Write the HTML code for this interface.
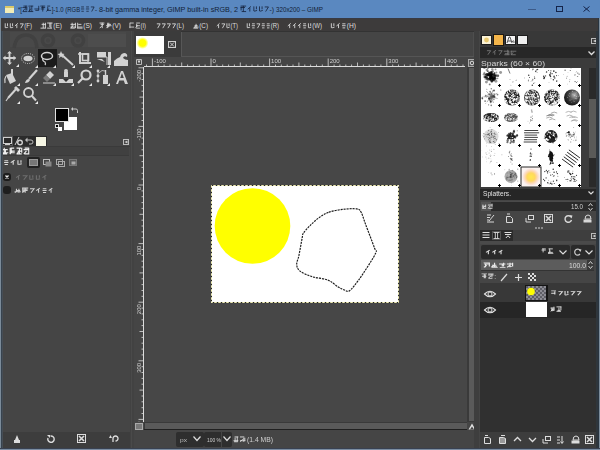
<!DOCTYPE html>
<html><head><meta charset="utf-8">
<style>
*{margin:0;padding:0;box-sizing:border-box}
html,body{width:600px;height:450px;overflow:hidden;background:#454545;font-family:"Liberation Sans",sans-serif;color:#d8d8d8}
.a{position:absolute}
.t{position:absolute;white-space:nowrap;line-height:1}
svg{position:absolute;overflow:visible}
#wrap{position:absolute;left:0;top:0;width:600px;height:450px;overflow:hidden;filter:blur(0.35px)}
</style></head><body><div id="wrap">
<div class="a" style="left:0px;top:0px;width:600px;height:18px;background:#5a88c0;"></div>
<div class="a" style="left:5px;top:6px;width:9px;height:7px;background:#f2ecb8;border-top:2px solid #d9c86a"></div>
<svg style="left:18px;top:5px" width="82" height="11"><g transform="scale(0.8263,1)"><path d="M6.56 1.09H11.28M5.38 2.53H10.10M5.97 6.56H11.28M9.51 0.80V5.41M10.69 1.95V5.41M8.33 3.68L5.67 6.56M12.58 1.09H18.48M12.58 6.56H18.48M14.35 1.95V6.56M16.71 0.80V6.56M15.53 3.68L12.87 6.56M19.78 3.97H25.68M20.96 5.41H25.09M25.09 0.80V5.41M26.98 1.09H32.88M28.16 2.53H32.88M27.57 3.97H31.70M29.93 0.80V6.56M35.36 1.09H38.90M35.36 5.41H40.08M35.95 1.95V5.41M37.13 3.68L34.47 6.56M76.43 1.95H79.87M76.18 3.97H80.12M76.67 6.27H79.63M82.43 1.95H85.87M82.18 3.97H86.12M82.67 6.27H85.63M88.18 1.95H92.12L89.17 6.56" fill="none" stroke="#121e36" stroke-width="0.80"/><text x="0.00" y="6.80" font-size="8" fill="#121e36" font-family="Liberation Sans" textLength="4.80" lengthAdjust="spacingAndGlyphs">*[</text><text x="40.80" y="6.80" font-size="8" fill="#121e36" font-family="Liberation Sans" textLength="34.41" lengthAdjust="spacingAndGlyphs">]-1.0 (RGB</text><text x="93.21" y="6.80" font-size="8" fill="#121e36" font-family="Liberation Sans" textLength="2.40" lengthAdjust="spacingAndGlyphs">-</text></g></svg>
<svg style="left:99px;top:5px" width="141" height="11"><text x="0" y="6.80" font-size="8" fill="#121e36" font-weight="normal" textLength="139" lengthAdjust="spacingAndGlyphs" font-family="Liberation Sans">8-bit gamma integer, GIMP built-in sRGB, 2</text></svg>
<svg style="left:240px;top:5px" width="37" height="11"><g transform="scale(0.9446,1)"><path d="M0.58 1.09H6.48M0.58 2.53H5.30M1.76 6.56H6.48M1.17 1.95V5.41M3.53 0.80V6.56M11.62 1.38L8.17 4.26M10.39 2.82V6.56M14.66 1.38V5.98Q14.91 6.56 18.11 5.41M17.37 1.38V4.26M20.66 1.38V5.98Q20.91 6.56 24.11 5.41M23.37 1.38V4.26M26.17 1.95H30.11L27.16 6.56" fill="none" stroke="#121e36" stroke-width="0.80"/><text x="31.20" y="6.80" font-size="8" fill="#121e36" font-family="Liberation Sans" textLength="4.80" lengthAdjust="spacingAndGlyphs">-)</text></g></svg>
<svg style="left:276px;top:5px" width="49" height="11"><text x="0" y="6.80" font-size="8" fill="#121e36" font-weight="normal" textLength="47" lengthAdjust="spacingAndGlyphs" font-family="Liberation Sans">320x200 – GIMP</text></svg>
<div class="a" style="left:528px;top:9px;width:8px;height:1px;background:#3c5a88;"></div>
<div class="a" style="left:556px;top:6px;width:7px;height:6px;background:transparent;border:1px solid #14244a"></div>
<svg style="left:583px;top:6px;" width="7" height="6" viewBox="0 0 7 6"><path d="M0.5 0.5L6.5 5.5M6.5 0.5L0.5 5.5" stroke="#14244a" stroke-width="1"/></svg>
<div class="a" style="left:0px;top:18px;width:600px;height:13px;background:#3d3b3b;"></div>
<div class="a" style="left:0px;top:18px;width:600px;height:1px;background:#383a44;"></div>
<svg style="left:4px;top:22px" width="31" height="10"><g transform="scale(0.8998,1)"><path d="M1.37 1.29V5.61Q1.60 6.15 4.60 5.07M3.91 1.29V3.99M7.00 1.29V5.61Q7.23 6.15 10.23 5.07M9.53 1.29V3.99M15.39 1.29L12.16 3.99M14.24 2.64V6.15M17.79 1.83H21.48L18.71 6.15" fill="none" stroke="#dedede" stroke-width="0.90"/><text x="22.50" y="6.38" font-size="7.5" fill="#dedede" font-family="Liberation Sans" textLength="8.62" lengthAdjust="spacingAndGlyphs">(F)</text></g></svg>
<svg style="left:40px;top:22px" width="25" height="10"><g transform="scale(0.9779,1)"><path d="M1.65 2.37H6.07M0.54 6.15H6.07M3.31 0.75V6.15M5.52 0.75V6.15M7.29 1.02H12.82M7.29 6.15H12.27M10.06 0.75V5.07M11.16 0.75V6.15" fill="none" stroke="#dedede" stroke-width="0.90"/><text x="13.50" y="6.38" font-size="7.5" fill="#dedede" font-family="Liberation Sans" textLength="9.00" lengthAdjust="spacingAndGlyphs">(E)</text></g></svg>
<svg style="left:70px;top:22px" width="25" height="10"><g transform="scale(0.9779,1)"><path d="M0.54 2.37H6.07M0.54 5.07H6.07M0.54 6.15H4.97M2.20 0.75V5.07M5.52 0.75V6.15M3.31 3.45L0.82 6.15M8.40 2.37H11.72M7.84 5.07H12.82M7.29 6.15H12.82M7.84 0.75V6.15" fill="none" stroke="#dedede" stroke-width="0.90"/><text x="13.50" y="6.38" font-size="7.5" fill="#dedede" font-family="Liberation Sans" textLength="9.00" lengthAdjust="spacingAndGlyphs">(S)</text></g></svg>
<svg style="left:99px;top:22px" width="25" height="10"><g transform="scale(0.9779,1)"><path d="M0.54 1.02H5.52M1.65 2.37H4.97M3.31 0.75V6.15M3.31 3.45L0.82 6.15M8.40 2.37H12.27M7.29 3.72H12.82M8.95 0.75V6.15M10.06 0.75V5.07M10.06 3.45L7.57 6.15" fill="none" stroke="#dedede" stroke-width="0.90"/><text x="13.50" y="6.38" font-size="7.5" fill="#dedede" font-family="Liberation Sans" textLength="9.00" lengthAdjust="spacingAndGlyphs">(V)</text></g></svg>
<svg style="left:129px;top:22px" width="20" height="10"><g transform="scale(0.8555,1)"><path d="M1.09 1.02H5.52M0.54 5.07H6.07M1.09 0.75V6.15M8.40 1.02H12.82M8.40 3.72H12.82M8.40 6.15H12.82M8.95 1.83V5.07M10.06 3.45L7.57 6.15" fill="none" stroke="#dedede" stroke-width="0.90"/><text x="13.50" y="6.38" font-size="7.5" fill="#dedede" font-family="Liberation Sans" textLength="6.37" lengthAdjust="spacingAndGlyphs">(I)</text></g></svg>
<svg style="left:156px;top:22px" width="31" height="10"><g transform="scale(0.9106,1)"><path d="M0.91 1.83H4.60L1.83 6.15M6.54 1.83H10.23L7.46 6.15M12.16 1.83H15.85L13.08 6.15M17.79 1.83H21.48L18.71 6.15" fill="none" stroke="#dedede" stroke-width="0.90"/><text x="22.50" y="6.38" font-size="7.5" fill="#dedede" font-family="Liberation Sans" textLength="8.25" lengthAdjust="spacingAndGlyphs">(L)</text></g></svg>
<svg style="left:193px;top:22px" width="18" height="10"><g transform="scale(0.9305,1)"><path d="M1.65 3.72H4.97M1.65 5.07H6.07M0.54 6.15H5.52M3.31 1.83V6.15M3.31 3.45L0.82 6.15" fill="none" stroke="#dedede" stroke-width="0.90"/><text x="6.75" y="6.38" font-size="7.5" fill="#dedede" font-family="Liberation Sans" textLength="9.37" lengthAdjust="spacingAndGlyphs">(C)</text></g></svg>
<svg style="left:216px;top:22px" width="25" height="10"><g transform="scale(0.8630,1)"><path d="M4.14 1.29L0.91 3.99M2.99 2.64V6.15M6.54 1.83H10.23L7.46 6.15M12.62 1.29V5.61Q12.85 6.15 15.85 5.07M15.16 1.29V3.99" fill="none" stroke="#dedede" stroke-width="0.90"/><text x="16.88" y="6.38" font-size="7.5" fill="#dedede" font-family="Liberation Sans" textLength="8.62" lengthAdjust="spacingAndGlyphs">(T)</text></g></svg>
<svg style="left:246px;top:22px" width="36" height="10"><g transform="scale(0.8801,1)"><path d="M1.37 1.29V5.61Q1.60 6.15 4.60 5.07M3.91 1.29V3.99M6.77 1.83H10.00M6.54 3.72H10.23M7.00 5.88H9.77M12.16 1.83H15.85L13.08 6.15M18.02 1.83H21.25M17.79 3.72H21.48M18.25 5.88H21.02M23.64 1.83H26.87M23.41 3.72H27.10M23.87 5.88H26.64" fill="none" stroke="#dedede" stroke-width="0.90"/><text x="28.12" y="6.38" font-size="7.5" fill="#dedede" font-family="Liberation Sans" textLength="9.37" lengthAdjust="spacingAndGlyphs">(R)</text></g></svg>
<svg style="left:287px;top:22px" width="38" height="10"><g transform="scale(0.8976,1)"><path d="M4.14 1.29L0.91 3.99M2.99 2.64V6.15M9.77 1.29L6.54 3.99M8.61 2.64V6.15M15.39 1.29L12.16 3.99M14.24 2.64V6.15M18.02 1.83H21.25M17.79 3.72H21.48M18.25 5.88H21.02M23.87 1.29V5.61Q24.10 6.15 27.10 5.07M26.41 1.29V3.99" fill="none" stroke="#dedede" stroke-width="0.90"/><text x="28.12" y="6.38" font-size="7.5" fill="#dedede" font-family="Liberation Sans" textLength="10.87" lengthAdjust="spacingAndGlyphs">(W)</text></g></svg>
<svg style="left:330px;top:22px" width="29" height="10"><g transform="scale(0.9907,1)"><path d="M1.37 1.29V5.61Q1.60 6.15 4.60 5.07M3.91 1.29V3.99M9.77 1.29L6.54 3.99M8.61 2.64V6.15M12.39 1.83H15.62M12.16 3.72H15.85M12.62 5.88H15.39" fill="none" stroke="#dedede" stroke-width="0.90"/><text x="16.88" y="6.38" font-size="7.5" fill="#dedede" font-family="Liberation Sans" textLength="9.37" lengthAdjust="spacingAndGlyphs">(H)</text></g></svg>
<div class="a" style="left:1px;top:31px;width:129px;height:417px;background:#454545;"></div>
<div class="a" style="left:10px;top:32px;width:116px;height:15px;background:#494949;"></div>
<svg style="left:10px;top:32px;" width="116" height="15" viewBox="0 0 116 15"><g fill="none" stroke="#414141" stroke-width="3.5"><path d="M4 16 Q6 3 16 3 Q26 3 27 16"/><circle cx="38" cy="8.5" r="5.5"/><circle cx="68" cy="8.5" r="5.5"/></g><path d="M78 2h38v13h-38z" fill="#4d4d4d"/><circle cx="38" cy="8.5" r="2" fill="#444"/><circle cx="68" cy="8.5" r="2" fill="#444"/></svg>
<div class="a" style="left:38px;top:49px;width:19px;height:18px;background:#1b1b1b;"></div>
<svg style="left:1px;top:49px;" width="18" height="18" viewBox="0 0 18 18"><path d="M8.5 3v12M2.5 9h12" stroke="#d2d2d2" stroke-width="1.8"/><path d="M8.5 2l-2.5 2.5h5zM8.5 16l-2.5-2.5h5zM2 9l2.5-2.5v5zM15 9l-2.5-2.5v5z" fill="#d2d2d2"/></svg>
<svg style="left:21px;top:49px;" width="18" height="18" viewBox="0 0 18 18"><ellipse cx="7" cy="9.5" rx="4.5" ry="2.7" fill="#d2d2d2"/><ellipse cx="7" cy="9.5" rx="6.5" ry="5" fill="none" stroke="#d2d2d2" stroke-width="1" stroke-dasharray="1 1.2"/></svg>
<svg style="left:39px;top:49px;" width="18" height="18" viewBox="0 0 18 18"><ellipse cx="8" cy="7" rx="5.5" ry="3.5" fill="none" stroke="#d2d2d2" stroke-width="1.5"/><path d="M4 9 Q3 12 6 13 Q7 15 6 16" fill="none" stroke="#d2d2d2" stroke-width="1.3"/></svg>
<svg style="left:57px;top:49px;" width="18" height="18" viewBox="0 0 18 18"><path d="M5 6L16 16" stroke="#d2d2d2" stroke-width="2"/><path d="M4 2l1 2.5 2.5.5-2 1.5.5 2.5-2-1.5-2 1.5.5-2.5-2-1.5 2.5-.5z" fill="#d2d2d2"/></svg>
<svg style="left:75px;top:49px;" width="18" height="18" viewBox="0 0 18 18"><path d="M5 3v11h11" fill="none" stroke="#d2d2d2" stroke-width="2"/><rect x="7.5" y="5" width="6" height="6.5" fill="none" stroke="#d2d2d2" stroke-width="1.6"/><path d="M3 5h10v10" fill="none" stroke="#d2d2d2" stroke-width="1.3"/></svg>
<svg style="left:93px;top:49px;" width="18" height="18" viewBox="0 0 18 18"><path d="M4 3h9v5h-9z M15 3h3v13h-3z M4 10h5l3 3" fill="#d2d2d2"/><path d="M4 8l10 0 0 8" fill="none" stroke="#d2d2d2" stroke-width="1"/></svg>
<svg style="left:111px;top:49px;" width="18" height="18" viewBox="0 0 18 18"><path d="M3 17v-5 Q6 9 9 8 Q10 4 14 4 Q17 5 16 8 Q13 6 12 9 Q14 11 17 11v6z" fill="#d2d2d2"/></svg>
<svg style="left:3px;top:67px;" width="18" height="18" viewBox="0 0 18 18"><path d="M3 8l6-2 4 8-6 3z" fill="#d2d2d2"/><path d="M9 2v6" stroke="#d2d2d2" stroke-width="2"/><path d="M3 9 Q1 12 2 16" stroke="#d2d2d2" stroke-width="1.2" fill="none"/></svg>
<svg style="left:21px;top:67px;" width="18" height="18" viewBox="0 0 18 18"><path d="M16 3L8 12" stroke="#d2d2d2" stroke-width="2.2"/><path d="M8 12 Q5 12 4 16 Q8 16 9 13z" fill="#d2d2d2"/></svg>
<svg style="left:39px;top:67px;" width="18" height="18" viewBox="0 0 18 18"><path d="M11 4l4 4-4 4-4-4z" fill="#d2d2d2"/><path d="M7 8l4 4-3 3-4-4z" fill="#7a7a7a"/><path d="M4 16h12" stroke="#d2d2d2" stroke-width="1"/></svg>
<svg style="left:57px;top:67px;" width="18" height="18" viewBox="0 0 18 18"><path d="M7 5h4v5h-4z" fill="#d2d2d2"/><circle cx="9" cy="4" r="2" fill="#d2d2d2"/><path d="M2 12h14v4h-14z" fill="#d2d2d2"/><path d="M6 12l3 3 3-3z" fill="#333"/></svg>
<svg style="left:75px;top:67px;" width="18" height="18" viewBox="0 0 18 18"><circle cx="11" cy="8" r="4.5" fill="none" stroke="#d2d2d2" stroke-width="2.2"/><path d="M8 11L3 16" stroke="#d2d2d2" stroke-width="2.2"/></svg>
<svg style="left:93px;top:67px;" width="18" height="18" viewBox="0 0 18 18"><circle cx="5" cy="4" r="1.4" fill="#d2d2d2"/><circle cx="5" cy="9" r="1.4" fill="#d2d2d2"/><circle cx="5" cy="14" r="1.4" fill="#d2d2d2"/><path d="M5 5v8" stroke="#d2d2d2" stroke-width=".8"/><rect x="10" y="8" width="5" height="9" fill="#d2d2d2"/><path d="M12.5 3v5" stroke="#d2d2d2" stroke-width="1.4"/><path d="M6 6 Q9 2 12 4" stroke="#d2d2d2" fill="none" stroke-width=".8"/></svg>
<svg style="left:111px;top:67px;" width="18" height="18" viewBox="0 0 18 18"><path d="M5 17L10 4h2l5 13h-3l-1.2-3.5h-4.6L7 17z M9.2 11h3.6L11 6z" fill="#d2d2d2" fill-rule="evenodd"/></svg>
<svg style="left:3px;top:85px;" width="18" height="18" viewBox="0 0 18 18"><path d="M14 3L5 13" stroke="#d2d2d2" stroke-width="2"/><path d="M11 3l4 4 2-2-4-4z" fill="#d2d2d2"/><path d="M5 13l-2 3" stroke="#d2d2d2" stroke-width="1.2"/></svg>
<svg style="left:21px;top:85px;" width="18" height="18" viewBox="0 0 18 18"><circle cx="7.5" cy="7.5" r="4.5" fill="none" stroke="#d2d2d2" stroke-width="1.8"/><path d="M10.5 10.5L15 15.5" stroke="#d2d2d2" stroke-width="2"/></svg>
<svg style="left:16px;top:64px;" width="3" height="3" viewBox="0 0 3 3"><path d="M3 0v3h-3z" fill="#e8e8e8"/></svg>
<svg style="left:35px;top:65px;" width="3" height="3" viewBox="0 0 3 3"><path d="M3 0v3h-3z" fill="#e8e8e8"/></svg>
<svg style="left:53px;top:65px;" width="3" height="3" viewBox="0 0 3 3"><path d="M3 0v3h-3z" fill="#e8e8e8"/></svg>
<svg style="left:72px;top:65px;" width="3" height="3" viewBox="0 0 3 3"><path d="M3 0v3h-3z" fill="#e8e8e8"/></svg>
<svg style="left:89px;top:65px;" width="3" height="3" viewBox="0 0 3 3"><path d="M3 0v3h-3z" fill="#e8e8e8"/></svg>
<svg style="left:107px;top:65px;" width="3" height="3" viewBox="0 0 3 3"><path d="M3 0v3h-3z" fill="#e8e8e8"/></svg>
<svg style="left:17px;top:83px;" width="3" height="3" viewBox="0 0 3 3"><path d="M3 0v3h-3z" fill="#e8e8e8"/></svg>
<svg style="left:35px;top:83px;" width="3" height="3" viewBox="0 0 3 3"><path d="M3 0v3h-3z" fill="#e8e8e8"/></svg>
<svg style="left:53px;top:83px;" width="3" height="3" viewBox="0 0 3 3"><path d="M3 0v3h-3z" fill="#e8e8e8"/></svg>
<svg style="left:71px;top:83px;" width="3" height="3" viewBox="0 0 3 3"><path d="M3 0v3h-3z" fill="#e8e8e8"/></svg>
<svg style="left:89px;top:83px;" width="3" height="3" viewBox="0 0 3 3"><path d="M3 0v3h-3z" fill="#e8e8e8"/></svg>
<svg style="left:107px;top:83px;" width="3" height="3" viewBox="0 0 3 3"><path d="M3 0v3h-3z" fill="#e8e8e8"/></svg>
<svg style="left:17px;top:101px;" width="3" height="3" viewBox="0 0 3 3"><path d="M3 0v3h-3z" fill="#e8e8e8"/></svg>
<svg style="left:35px;top:101px;" width="3" height="3" viewBox="0 0 3 3"><path d="M3 0v3h-3z" fill="#e8e8e8"/></svg>
<div class="a" style="left:64px;top:117px;width:13px;height:13px;background:#fff;"></div>
<div class="a" style="left:55px;top:108px;width:14px;height:14px;background:#000;border:1px solid #e0e0e0"></div>
<svg style="left:71px;top:107px;" width="7" height="7" viewBox="0 0 7 7"><path d="M1 2h4a1.5 1.5 0 0 1 1.5 1.5V6" fill="none" stroke="#ccc" stroke-width="1"/><path d="M0 2l2-2v4z" fill="#ccc"/></svg>
<div class="a" style="left:55px;top:124px;width:4px;height:4px;background:#000;border:1px solid #ddd"></div>
<div class="a" style="left:58px;top:127px;width:4px;height:4px;background:#fff;"></div>
<div class="a" style="left:2px;top:136px;width:45px;height:10px;background:#2b2b2b;"></div>
<div class="a" style="left:2px;top:136px;width:11px;height:10px;background:#2b2b2b;border:1px solid #555"></div>
<svg style="left:3px;top:137px;" width="9" height="8" viewBox="0 0 9 8"><rect x="0.5" y="0.5" width="8" height="6" fill="none" stroke="#cfcfcf"/><path d="M2 7.5h5" stroke="#cfcfcf"/></svg>
<svg style="left:14px;top:137px;" width="9" height="8" viewBox="0 0 9 8"><path d="M1 8L5 0" stroke="#d0d0d0" stroke-width="1"/><circle cx="6" cy="5.5" r="2.3" fill="none" stroke="#d0d0d0" stroke-width="1.4"/></svg>
<svg style="left:25px;top:137px;" width="9" height="8" viewBox="0 0 9 8"><path d="M2 3h4a2 2 0 0 1 0 4H4" fill="none" stroke="#bbb" stroke-width="1"/><path d="M0 3l2.5-2.5v5z" fill="#bbb"/></svg>
<div class="a" style="left:36px;top:137px;width:10px;height:9px;background:#f6f6e4;"></div>
<svg style="left:123px;top:139px;" width="6" height="6" viewBox="0 0 6 6"><rect x="0.5" y="0.5" width="5" height="5" fill="none" stroke="#bbb"/><path d="M4.5 1.5v3l-3-1.5z" fill="#ccc"/></svg>
<div class="a" style="left:2px;top:146px;width:128px;height:1px;background:#3a3a3a;"></div>
<div class="a" style="left:2px;top:147px;width:127px;height:8px;background:#404040;"></div>
<svg style="left:2px;top:147px" width="31" height="11"><g transform="scale(0.9150,1)"><path d="M0.61 2.69H6.26M0.61 5.75H6.88M0.61 6.97H5.63M2.49 0.85V6.97M3.75 2.07V6.97M9.52 1.16H13.28M9.52 4.22H13.91M9.52 5.75H13.91M8.89 0.85V6.97M10.14 0.85V5.75M11.40 3.91L8.58 6.97M15.91 1.16H20.93M17.17 4.22H22.19M15.91 6.97H21.56M19.05 0.85V6.97M21.56 0.85V5.75M19.05 3.91L16.23 6.97M24.82 1.16H29.21M23.56 2.69H29.84M24.82 6.97H29.84M29.21 0.85V6.97M26.70 3.91L23.88 6.97" fill="none" stroke="#f0f0f0" stroke-width="1.20"/></g></svg>
<div class="a" style="left:2px;top:155px;width:127px;height:1px;background:#3a3a3a;"></div>
<svg style="left:3px;top:159px" width="23" height="10"><g transform="scale(1.2698,1)"><path d="M1.07 1.71H4.08M0.85 3.47H4.29M1.28 5.49H3.86M9.11 1.20L6.10 3.72M8.04 2.46V5.74M11.78 1.20V5.24Q12.00 5.74 14.79 4.73M14.15 1.20V3.72" fill="none" stroke="#dadada" stroke-width="0.90"/></g></svg>
<div class="a" style="left:27px;top:157px;width:13px;height:11px;background:#222222;border-radius:2px"></div>
<svg style="left:29px;top:159px;" width="9" height="7" viewBox="0 0 9 7"><rect x="0.5" y="0.5" width="8" height="6" fill="#777" stroke="#999"/></svg>
<svg style="left:43px;top:159px;" width="9" height="8" viewBox="0 0 9 8"><rect x="0.5" y="0.5" width="6" height="5" fill="none" stroke="#bbb"/><rect x="2.5" y="2.5" width="6" height="5" fill="#888"/></svg>
<svg style="left:56px;top:159px;" width="9" height="8" viewBox="0 0 9 8"><rect x="0.5" y="0.5" width="6" height="5" fill="none" stroke="#aaa"/><rect x="2.5" y="2.5" width="6" height="5" fill="none" stroke="#aaa"/></svg>
<svg style="left:69px;top:159px;" width="9" height="8" viewBox="0 0 9 8"><rect x="0.5" y="0.5" width="7" height="6" fill="#5a5a5a" stroke="#777"/><rect x="2.5" y="2.5" width="4" height="3" fill="#aaa"/></svg>
<div class="a" style="left:3px;top:173px;width:8px;height:8px;background:#1c1c1c;border-radius:3px"></div>
<svg style="left:5px;top:175px;" width="4" height="4" viewBox="0 0 4 4"><path d="M0.5 0.5l3 3M3.5 0.5l-3 3" stroke="#eee" stroke-width="1.3"/></svg>
<svg style="left:15px;top:174px" width="36" height="10"><g transform="scale(1.2571,1)"><path d="M3.86 1.20L0.85 3.72M2.79 2.46V5.74M6.10 1.71H9.54L6.96 5.74M11.78 1.20V5.24Q12.00 5.74 14.79 4.73M14.15 1.20V3.72M17.03 1.20V5.24Q17.25 5.74 20.04 4.73M19.40 1.20V3.72M24.86 1.20L21.85 3.72M23.79 2.46V5.74" fill="none" stroke="#6e6e6e" stroke-width="0.90"/></g></svg>
<div class="a" style="left:3px;top:186px;width:8px;height:8px;background:#1e1e1e;border-radius:3px"></div>
<svg style="left:14px;top:187px" width="43" height="10"><g transform="scale(1.1905,1)"><path d="M1.54 3.47H5.15M0.50 4.73H5.67M2.05 1.71V4.73M4.12 1.71V5.74M3.09 3.22L0.76 5.74M6.80 0.95H11.97M7.84 2.21H11.45M7.84 3.47H11.45M7.32 0.70V5.74M9.39 0.70V5.74M9.39 3.22L7.06 5.74M13.45 1.71H16.89L14.31 5.74M21.71 1.20L18.70 3.72M20.64 2.46V5.74M24.17 1.71H27.18M23.95 3.47H27.39M24.38 5.49H26.96M32.21 1.20L29.20 3.72M31.14 2.46V5.74" fill="none" stroke="#d0d0d0" stroke-width="0.90"/></g></svg>
<div class="a" style="left:1px;top:432px;width:129px;height:16px;background:#3d3d3d;"></div>
<svg style="left:13px;top:434px;" width="8" height="10" viewBox="0 0 8 10"><path d="M4 1l2 5h-4z" fill="#ddd"/><rect x="1" y="6" width="6" height="3" fill="#ddd"/></svg>
<svg style="left:46px;top:434px;" width="9" height="10" viewBox="0 0 9 10"><path d="M2 4 A3.2 3.2 0 1 0 4.5 2" fill="none" stroke="#ddd" stroke-width="1.4"/><path d="M1 1h3v3z" fill="#ddd"/></svg>
<svg style="left:77px;top:434px;" width="9" height="10" viewBox="0 0 9 10"><rect x="0.5" y="0.5" width="8" height="8" fill="none" stroke="#ddd"/><path d="M2 2l5 5M7 2l-5 5" stroke="#ddd" stroke-width="1.6"/></svg>
<svg style="left:109px;top:434px;" width="9" height="10" viewBox="0 0 9 10"><path d="M4 8V4.5a2.5 2.5 0 1 1 2.5 2.5" fill="none" stroke="#ddd" stroke-width="1.3"/><path d="M0 4h3l-1.5-3z" fill="#ddd"/></svg>
<div class="a" style="left:130px;top:31px;width:4px;height:417px;background:#424242;"></div>
<div class="a" style="left:131px;top:31px;width:1px;height:417px;background:#4a4a4a;"></div>
<div class="a" style="left:134px;top:31px;width:342px;height:26px;background:#454545;"></div>
<div class="a" style="left:134px;top:31px;width:342px;height:1px;background:#333;"></div>
<div class="a" style="left:134px;top:31px;width:47px;height:26px;background:#3b3b3b;"></div>
<div class="a" style="left:181px;top:32px;width:1px;height:25px;background:#575757;"></div>
<div class="a" style="left:473px;top:32px;width:1px;height:25px;background:#4e4e4e;"></div>
<div class="a" style="left:181px;top:56px;width:293px;height:1px;background:#555;"></div>
<div class="a" style="left:136px;top:36px;width:28px;height:18px;background:#ffffff;"></div>
<svg style="left:136px;top:36px;" width="28" height="18" viewBox="0 0 28 18"><defs><radialGradient id="yb"><stop offset="0.55" stop-color="#ffff00"/><stop offset="1" stop-color="#ffff00" stop-opacity="0"/></radialGradient></defs><circle cx="6.5" cy="7" r="6" fill="url(#yb)"/></svg>
<svg style="left:168px;top:41px;" width="8" height="7" viewBox="0 0 8 7"><rect x="0.5" y="0.5" width="7" height="6" fill="none" stroke="#cfcfcf"/><path d="M2 1.5l4 4M6 1.5l-4 4" stroke="#cfcfcf" stroke-width="1"/></svg>
<div class="a" style="left:134px;top:57px;width:333px;height:10px;background:#454545;"></div>
<div class="a" style="left:134px;top:67px;width:10px;height:355px;background:#454545;"></div>
<svg style="left:136px;top:59px;" width="6" height="6" viewBox="0 0 6 6"><path d="M0.5 0.5h5v5h-5z" fill="none" stroke="#bbb"/><path d="M1.5 1.5l1.5 3 1.5-3z" fill="#ddd"/></svg>
<svg style="left:144px;top:57px;" width="322" height="10" viewBox="0 0 322 10"><path d="M0 9.5H321" stroke="#dcdcdc" stroke-width="1"/><path d="M2.5 7.5 V9.5 M8.4 1.5 V9.5 M14.3 7.5 V9.5 M20.1 7.5 V9.5 M26.0 7.5 V9.5 M31.8 7.5 V9.5 M37.7 5.5 V9.5 M43.6 7.5 V9.5 M49.4 7.5 V9.5 M55.3 7.5 V9.5 M61.1 7.5 V9.5 M67.0 1.5 V9.5 M72.9 7.5 V9.5 M78.7 7.5 V9.5 M84.6 7.5 V9.5 M90.4 7.5 V9.5 M96.3 5.5 V9.5 M102.2 7.5 V9.5 M108.0 7.5 V9.5 M113.9 7.5 V9.5 M119.7 7.5 V9.5 M125.6 1.5 V9.5 M131.5 7.5 V9.5 M137.3 7.5 V9.5 M143.2 7.5 V9.5 M149.0 7.5 V9.5 M154.9 5.5 V9.5 M160.8 7.5 V9.5 M166.6 7.5 V9.5 M172.5 7.5 V9.5 M178.3 7.5 V9.5 M184.2 1.5 V9.5 M190.1 7.5 V9.5 M195.9 7.5 V9.5 M201.8 7.5 V9.5 M207.6 7.5 V9.5 M213.5 5.5 V9.5 M219.4 7.5 V9.5 M225.2 7.5 V9.5 M231.1 7.5 V9.5 M236.9 7.5 V9.5 M242.8 1.5 V9.5 M248.7 7.5 V9.5 M254.5 7.5 V9.5 M260.4 7.5 V9.5 M266.2 7.5 V9.5 M272.1 5.5 V9.5 M278.0 7.5 V9.5 M283.8 7.5 V9.5 M289.7 7.5 V9.5 M295.5 7.5 V9.5 M301.4 1.5 V9.5 M307.3 7.5 V9.5 M313.1 7.5 V9.5 M319.0 7.5 V9.5 " stroke="#dcdcdc" stroke-width="0.8"/><text x="9.9" y="6" font-size="6" fill="#d0d0d0" font-family="Liberation Sans">-100</text><text x="68.5" y="6" font-size="6" fill="#d0d0d0" font-family="Liberation Sans">0</text><text x="127.1" y="6" font-size="6" fill="#d0d0d0" font-family="Liberation Sans">100</text><text x="185.7" y="6" font-size="6" fill="#d0d0d0" font-family="Liberation Sans">200</text><text x="244.3" y="6" font-size="6" fill="#d0d0d0" font-family="Liberation Sans">300</text><text x="302.9" y="6" font-size="6" fill="#d0d0d0" font-family="Liberation Sans">400</text></svg>
<svg style="left:134px;top:67px;" width="10" height="355" viewBox="0 0 10 355"><path d="M9.5 0V355" stroke="#dcdcdc" stroke-width="1"/><path d="M4.5 0.8 H9.5 M7.5 6.7 H9.5 M7.5 12.5 H9.5 M7.5 18.4 H9.5 M7.5 24.2 H9.5 M5.5 30.1 H9.5 M7.5 36.0 H9.5 M7.5 41.8 H9.5 M7.5 47.7 H9.5 M7.5 53.5 H9.5 M4.5 59.4 H9.5 M7.5 65.3 H9.5 M7.5 71.1 H9.5 M7.5 77.0 H9.5 M7.5 82.8 H9.5 M5.5 88.7 H9.5 M7.5 94.6 H9.5 M7.5 100.4 H9.5 M7.5 106.3 H9.5 M7.5 112.1 H9.5 M4.5 118.0 H9.5 M7.5 123.9 H9.5 M7.5 129.7 H9.5 M7.5 135.6 H9.5 M7.5 141.4 H9.5 M5.5 147.3 H9.5 M7.5 153.2 H9.5 M7.5 159.0 H9.5 M7.5 164.9 H9.5 M7.5 170.7 H9.5 M4.5 176.6 H9.5 M7.5 182.5 H9.5 M7.5 188.3 H9.5 M7.5 194.2 H9.5 M7.5 200.0 H9.5 M5.5 205.9 H9.5 M7.5 211.8 H9.5 M7.5 217.6 H9.5 M7.5 223.5 H9.5 M7.5 229.3 H9.5 M4.5 235.2 H9.5 M7.5 241.1 H9.5 M7.5 246.9 H9.5 M7.5 252.8 H9.5 M7.5 258.6 H9.5 M5.5 264.5 H9.5 M7.5 270.4 H9.5 M7.5 276.2 H9.5 M7.5 282.1 H9.5 M7.5 287.9 H9.5 M4.5 293.8 H9.5 M7.5 299.7 H9.5 M7.5 305.5 H9.5 M7.5 311.4 H9.5 M7.5 317.2 H9.5 M5.5 323.1 H9.5 M7.5 329.0 H9.5 M7.5 334.8 H9.5 M7.5 340.7 H9.5 M7.5 346.5 H9.5 M4.5 352.4 H9.5 " stroke="#dcdcdc" stroke-width="0.8"/><text transform="translate(7.2,14.8) rotate(-90)" font-size="6" fill="#d0d0d0" font-family="Liberation Sans">-200</text><text transform="translate(7.2,73.4) rotate(-90)" font-size="6" fill="#d0d0d0" font-family="Liberation Sans">-100</text><text transform="translate(7.2,123.3) rotate(-90)" font-size="6" fill="#d0d0d0" font-family="Liberation Sans">0</text><text transform="translate(7.2,188.6) rotate(-90)" font-size="6" fill="#d0d0d0" font-family="Liberation Sans">100</text><text transform="translate(7.2,247.2) rotate(-90)" font-size="6" fill="#d0d0d0" font-family="Liberation Sans">200</text><text transform="translate(7.2,305.8) rotate(-90)" font-size="6" fill="#d0d0d0" font-family="Liberation Sans">300</text><text transform="translate(7.2,364.4) rotate(-90)" font-size="6" fill="#d0d0d0" font-family="Liberation Sans">400</text></svg>
<div class="a" style="left:144px;top:67px;width:323px;height:355px;background:#474747;"></div>
<div class="a" style="left:211px;top:185px;width:188px;height:118px;background:#ffffff;"></div>
<svg style="left:211px;top:185px;" width="188" height="118" viewBox="0 0 188 118"><circle cx="41.5" cy="41" r="37.8" fill="#ffff00"/><rect x="0.5" y="0.5" width="187" height="117" fill="none" stroke="#2a2a20" stroke-width="1" stroke-dasharray="2 2"/><rect x="0.5" y="0.5" width="187" height="117" fill="none" stroke="#f4f0b0" stroke-width="1" stroke-dasharray="2 2" stroke-dashoffset="2"/></svg>
<svg style="left:211px;top:185px;" width="188" height="118" viewBox="0 0 188 118"><path d="M117.90 27.20 C121.97 25.78 127.67 24.85 132.30 24.30 C136.93 23.75 142.73 23.42 145.70 23.90 C148.67 24.38 148.62 24.62 150.10 27.20 C151.58 29.78 152.38 33.47 154.60 39.40 C156.82 45.33 161.73 57.98 163.40 62.80 C165.07 67.62 166.45 64.05 164.60 68.30 C162.75 72.55 155.83 82.92 152.30 88.30 C148.77 93.68 145.80 97.63 143.40 100.60 C141.00 103.57 139.57 105.37 137.90 106.10 C136.23 106.83 135.25 105.73 133.40 105.00 C131.55 104.27 129.57 103.37 126.80 101.70 C124.03 100.03 121.07 96.67 116.80 95.00 C112.53 93.33 105.83 93.18 101.20 91.70 C96.57 90.22 91.58 88.15 89.00 86.10 C86.42 84.05 85.88 81.98 85.70 79.40 C85.52 76.82 86.98 75.03 87.90 70.60 C88.82 66.17 90.47 56.52 91.20 52.80 C91.93 49.08 91.00 50.33 92.30 48.30 C93.60 46.27 96.40 43.18 99.00 40.60 C101.60 38.02 104.75 35.03 107.90 32.80 C111.05 30.57 113.83 28.62 117.90 27.20Z" fill="none" stroke="#eee" stroke-width="1"/><path d="M117.90 27.20 C121.97 25.78 127.67 24.85 132.30 24.30 C136.93 23.75 142.73 23.42 145.70 23.90 C148.67 24.38 148.62 24.62 150.10 27.20 C151.58 29.78 152.38 33.47 154.60 39.40 C156.82 45.33 161.73 57.98 163.40 62.80 C165.07 67.62 166.45 64.05 164.60 68.30 C162.75 72.55 155.83 82.92 152.30 88.30 C148.77 93.68 145.80 97.63 143.40 100.60 C141.00 103.57 139.57 105.37 137.90 106.10 C136.23 106.83 135.25 105.73 133.40 105.00 C131.55 104.27 129.57 103.37 126.80 101.70 C124.03 100.03 121.07 96.67 116.80 95.00 C112.53 93.33 105.83 93.18 101.20 91.70 C96.57 90.22 91.58 88.15 89.00 86.10 C86.42 84.05 85.88 81.98 85.70 79.40 C85.52 76.82 86.98 75.03 87.90 70.60 C88.82 66.17 90.47 56.52 91.20 52.80 C91.93 49.08 91.00 50.33 92.30 48.30 C93.60 46.27 96.40 43.18 99.00 40.60 C101.60 38.02 104.75 35.03 107.90 32.80 C111.05 30.57 113.83 28.62 117.90 27.20Z" fill="none" stroke="#1a1a1a" stroke-width="1.15" stroke-dasharray="2 1"/></svg>
<div class="a" style="left:467px;top:57px;width:9px;height:10px;background:#454545;"></div>
<svg style="left:468px;top:59px;" width="8" height="8" viewBox="0 0 8 8"><rect x="0.5" y="0.5" width="7" height="7" fill="#555" stroke="#aaa"/><circle cx="4" cy="4" r="1.8" fill="none" stroke="#ddd"/></svg>
<div class="a" style="left:467px;top:67px;width:9px;height:355px;background:#3a3a3a;"></div>
<div class="a" style="left:468px;top:67px;width:7px;height:355px;background:#5a5a5a;border:1px solid #3a3a3a"></div>
<div class="a" style="left:134px;top:422px;width:10px;height:8px;background:#454545;"></div>
<svg style="left:135px;top:423px;" width="8" height="7" viewBox="0 0 8 7"><rect x="0.5" y="0.5" width="7" height="6" fill="#666" stroke="#aaa"/><path d="M2 1v5M4 1v5M6 1v5" stroke="#aaa" stroke-width=".6"/></svg>
<div class="a" style="left:144px;top:422px;width:323px;height:8px;background:#3a3a3a;"></div>
<div class="a" style="left:145px;top:423px;width:322px;height:6px;background:#5a5a5a;"></div>
<div class="a" style="left:144px;top:429px;width:323px;height:1px;background:#202020;"></div>
<svg style="left:468px;top:423px;" width="8" height="7" viewBox="0 0 8 7"><path d="M4 0.5L7.5 6.5H0.5z" fill="#e0e0e0"/><path d="M4 3.5L6 6.5H2z" fill="#454545"/></svg>
<div class="a" style="left:134px;top:430px;width:342px;height:18px;background:#454545;"></div>
<div class="a" style="left:176px;top:432px;width:28px;height:15px;background:#2e2e2e;border-radius:2px"></div>
<svg style="left:180px;top:437px" width="9" height="10"><text x="0" y="5.10" font-size="6" fill="#bbb" font-weight="normal" textLength="7" lengthAdjust="spacingAndGlyphs" font-family="Liberation Sans">px</text></svg>
<svg style="left:193px;top:436px;" width="8" height="6" viewBox="0 0 8 6"><path d="M0.5 0.5l3.5 4 3.5-4" fill="none" stroke="#ddd" stroke-width="1.2"/></svg>
<div class="a" style="left:204px;top:432px;width:28px;height:15px;background:#2e2e2e;border-radius:2px"></div>
<svg style="left:207px;top:437px" width="16" height="10"><text x="0" y="5.10" font-size="6" fill="#ccc" font-weight="normal" textLength="14" lengthAdjust="spacingAndGlyphs" font-family="Liberation Sans">100 %</text></svg>
<div class="a" style="left:221px;top:432px;width:1px;height:15px;background:#454545;"></div>
<svg style="left:223px;top:436px;" width="8" height="6" viewBox="0 0 8 6"><path d="M0.5 0.5l3.5 4 3.5-4" fill="none" stroke="#ddd" stroke-width="1.2"/></svg>
<svg style="left:233px;top:436px" width="16" height="10"><g transform="scale(1.0317,1)"><path d="M1.54 0.95H5.15M0.50 4.73H5.15M1.02 5.74H4.64M2.05 1.71V5.74M4.12 0.70V5.74M6.80 0.95H10.94M6.80 4.73H11.97M10.42 1.71V5.74M11.45 1.71V4.73M9.39 3.22L7.06 5.74" fill="none" stroke="#dddddd" stroke-width="0.90"/></g></svg>
<svg style="left:247px;top:436px" width="28" height="10"><text x="0" y="5.95" font-size="7" fill="#d0d0d0" font-weight="normal" textLength="26" lengthAdjust="spacingAndGlyphs" font-family="Liberation Sans">(1.4 MB)</text></svg>
<div class="a" style="left:474px;top:31px;width:5px;height:417px;background:#3e3e3e;"></div>
<div class="a" style="left:479px;top:31px;width:118px;height:417px;background:#454545;"></div>
<div class="a" style="left:480px;top:31px;width:117px;height:16px;background:#383838;"></div>
<div class="a" style="left:481px;top:35px;width:11px;height:10px;background:#1d1d1d;"></div>
<div class="a" style="left:482px;top:36px;width:9px;height:8px;background:#fbf3d8;"></div>
<svg style="left:483px;top:37px;" width="7" height="6" viewBox="0 0 7 6"><circle cx="3.5" cy="3" r="2.4" fill="#e8c870"/></svg>
<div class="a" style="left:493px;top:34px;width:11px;height:12px;background:#1e1a14;"></div>
<div class="a" style="left:494px;top:35px;width:9px;height:10px;background:#f4b54a;"></div>
<div class="a" style="left:505px;top:35px;width:11px;height:10px;background:#1d1d1d;"></div>
<div class="a" style="left:506px;top:36px;width:9px;height:8px;background:#f4f4f4;"></div>
<svg style="left:506px;top:36px;" width="9" height="8" viewBox="0 0 9 8"><path d="M1 7L3 1h1l2 6M2 5h3M6 6 Q8 3 8 7" fill="none" stroke="#333" stroke-width=".8"/></svg>
<div class="a" style="left:517px;top:35px;width:11px;height:10px;background:#1d1d1d;"></div>
<div class="a" style="left:518px;top:36px;width:9px;height:8px;background:#f0f0f0;"></div>
<svg style="left:591px;top:38px;" width="7" height="6" viewBox="0 0 7 6"><rect x="0.5" y="0.5" width="6" height="5" fill="none" stroke="#bbb"/><path d="M5 1.5v3l-3-1.5z" fill="#ccc"/></svg>
<div class="a" style="left:480px;top:47px;width:117px;height:11px;background:#272727;"></div>
<div class="a" style="left:480px;top:58px;width:117px;height:10px;background:#3b3b3b;"></div>
<svg style="left:486px;top:49px" width="34" height="10"><g transform="scale(1.0935,1)"><path d="M0.85 1.71H4.29L1.71 5.74M9.11 1.20L6.10 3.72M8.04 2.46V5.74M11.35 1.71H14.79L12.21 5.74M16.25 2.21H20.90M17.29 4.73H20.39M16.77 5.74H21.42M19.87 0.70V5.74M20.90 1.71V5.74M22.55 2.21H27.72M23.07 5.74H27.20M23.07 1.71V5.74M25.14 3.22L22.81 5.74" fill="none" stroke="#7c7c7c" stroke-width="0.80"/></g></svg>
<svg style="left:588px;top:51px;" width="7" height="5" viewBox="0 0 7 5"><path d="M0.5 0.5l3 3 3-3" fill="none" stroke="#ddd" stroke-width="1.3"/></svg>
<svg style="left:481px;top:60px" width="66" height="10"><text x="0" y="5.52" font-size="6.5" fill="#d4d4d4" font-weight="normal" textLength="64" lengthAdjust="spacingAndGlyphs" font-family="Liberation Sans">Sparks (60 × 60)</text></svg>
<div class="a" style="left:481px;top:68px;width:101px;height:120px;background:#ffffff;"></div>
<div class="a" style="left:581px;top:68px;width:8px;height:120px;background:#3c3c3c;"></div>
<div class="a" style="left:589px;top:68px;width:7px;height:120px;background:#2a2a2a;"></div>
<div class="a" style="left:589px;top:99px;width:7px;height:59px;background:#5a5a58;"></div>
<svg style="left:482px;top:68px;" width="100" height="120" viewBox="0 0 100 120"><circle cx="8.1" cy="10.3" r="1.15" fill="#000" opacity="0.40"/><circle cx="12.9" cy="10.4" r="0.87" fill="#000" opacity="0.40"/><circle cx="12.9" cy="10.0" r="0.54" fill="#000" opacity="0.40"/><circle cx="7.8" cy="9.0" r="0.59" fill="#000" opacity="0.40"/><circle cx="3.2" cy="11.5" r="0.62" fill="#000" opacity="0.40"/><circle cx="9.8" cy="13.3" r="1.45" fill="#000" opacity="0.40"/><circle cx="5.9" cy="6.9" r="1.48" fill="#000" opacity="0.40"/><circle cx="15.6" cy="10.5" r="0.79" fill="#000" opacity="0.40"/><circle cx="10.1" cy="9.9" r="0.81" fill="#000" opacity="0.40"/><circle cx="9.9" cy="6.5" r="1.08" fill="#000" opacity="0.40"/><circle cx="6.8" cy="5.9" r="1.05" fill="#000" opacity="0.40"/><circle cx="10.1" cy="9.0" r="0.71" fill="#000" opacity="0.40"/><circle cx="7.4" cy="5.2" r="0.81" fill="#000" opacity="0.40"/><circle cx="5.7" cy="6.5" r="0.80" fill="#000" opacity="0.40"/><circle cx="10.5" cy="3.3" r="0.74" fill="#000" opacity="0.40"/><circle cx="5.2" cy="6.6" r="1.38" fill="#000" opacity="0.40"/><circle cx="8.6" cy="5.6" r="1.48" fill="#000" opacity="0.40"/><circle cx="11.7" cy="11.0" r="1.26" fill="#000" opacity="0.40"/><circle cx="11.3" cy="11.8" r="0.54" fill="#000" opacity="0.40"/><circle cx="6.1" cy="3.3" r="1.07" fill="#000" opacity="0.40"/><circle cx="11.2" cy="6.4" r="1.20" fill="#000" opacity="0.40"/><circle cx="5.2" cy="5.9" r="0.96" fill="#000" opacity="0.40"/><circle cx="13.5" cy="1.4" r="0.97" fill="#000" opacity="0.40"/><circle cx="8.4" cy="7.4" r="1.20" fill="#000" opacity="0.40"/><circle cx="2.4" cy="-0.3" r="1.32" fill="#000" opacity="0.40"/><circle cx="8.3" cy="11.9" r="1.17" fill="#000" opacity="0.40"/><circle cx="12.9" cy="9.1" r="0.67" fill="#000" opacity="0.40"/><circle cx="9.9" cy="9.3" r="1.27" fill="#000" opacity="0.40"/><circle cx="10.8" cy="10.4" r="0.89" fill="#000" opacity="0.40"/><circle cx="10.0" cy="7.5" r="0.95" fill="#000" opacity="0.40"/><circle cx="2.1" cy="6.3" r="1.32" fill="#000" opacity="0.40"/><circle cx="10.9" cy="6.4" r="0.92" fill="#000" opacity="0.40"/><circle cx="4.4" cy="14.1" r="1.46" fill="#000" opacity="0.40"/><circle cx="10.3" cy="10.3" r="0.73" fill="#000" opacity="0.40"/><circle cx="9.4" cy="12.5" r="1.09" fill="#000" opacity="0.40"/><circle cx="9.0" cy="8.8" r="0.92" fill="#000" opacity="0.40"/><circle cx="5.9" cy="11.8" r="1.45" fill="#000" opacity="0.40"/><circle cx="7.5" cy="4.6" r="1.12" fill="#000" opacity="0.40"/><circle cx="8.5" cy="7.5" r="1.40" fill="#000" opacity="0.40"/><circle cx="10.3" cy="1.5" r="1.30" fill="#000" opacity="0.40"/><circle cx="6.2" cy="10.7" r="0.60" fill="#000" opacity="0.40"/><circle cx="8.2" cy="7.6" r="0.57" fill="#000" opacity="0.40"/><circle cx="9.5" cy="10.5" r="0.84" fill="#000" opacity="0.40"/><circle cx="9.1" cy="8.5" r="0.65" fill="#000" opacity="0.40"/><circle cx="11.7" cy="10.5" r="0.53" fill="#000" opacity="0.40"/><circle cx="12.4" cy="5.1" r="0.65" fill="#000" opacity="0.40"/><circle cx="9.0" cy="11.7" r="0.86" fill="#000" opacity="0.40"/><circle cx="13.9" cy="13.2" r="1.49" fill="#000" opacity="0.40"/><circle cx="5.1" cy="9.4" r="0.59" fill="#000" opacity="0.40"/><circle cx="11.6" cy="10.4" r="0.76" fill="#000" opacity="0.40"/><circle cx="10.0" cy="6.7" r="0.52" fill="#000" opacity="0.40"/><circle cx="13.1" cy="7.2" r="0.65" fill="#000" opacity="0.40"/><circle cx="8.2" cy="8.3" r="1.03" fill="#000" opacity="0.40"/><circle cx="15.9" cy="7.6" r="1.20" fill="#000" opacity="0.40"/><circle cx="8.8" cy="11.8" r="0.67" fill="#000" opacity="0.40"/><circle cx="9.6" cy="4.2" r="1.28" fill="#000" opacity="0.40"/><circle cx="7.8" cy="10.7" r="1.31" fill="#000" opacity="0.40"/><circle cx="15.8" cy="7.9" r="1.31" fill="#000" opacity="0.40"/><circle cx="11.4" cy="3.3" r="0.73" fill="#000" opacity="0.40"/><circle cx="5.7" cy="8.1" r="0.53" fill="#000" opacity="0.40"/><circle cx="11.8" cy="9.0" r="0.76" fill="#000" opacity="0.40"/><circle cx="5.9" cy="0.3" r="0.95" fill="#000" opacity="0.40"/><circle cx="18.6" cy="4.5" r="1.46" fill="#000" opacity="0.40"/><circle cx="7.4" cy="10.4" r="0.73" fill="#000" opacity="0.40"/><circle cx="9.8" cy="10.7" r="1.12" fill="#000" opacity="0.40"/><circle cx="14.4" cy="4.6" r="0.98" fill="#000" opacity="0.40"/><circle cx="5.4" cy="3.4" r="0.58" fill="#000" opacity="0.40"/><circle cx="4.9" cy="2.0" r="1.28" fill="#000" opacity="0.40"/><circle cx="9.0" cy="4.5" r="0.68" fill="#000" opacity="0.40"/><circle cx="9.8" cy="5.4" r="1.30" fill="#000" opacity="0.40"/><circle cx="12.5" cy="7.9" r="0.90" fill="#000" opacity="0.40"/><circle cx="14.3" cy="6.7" r="0.67" fill="#000" opacity="0.40"/><circle cx="10.4" cy="9.9" r="1.40" fill="#000" opacity="0.40"/><circle cx="9.7" cy="6.7" r="1.33" fill="#000" opacity="0.40"/><circle cx="14.1" cy="7.9" r="0.85" fill="#000" opacity="0.40"/><circle cx="7.2" cy="7.9" r="0.51" fill="#000" opacity="0.40"/><circle cx="14.0" cy="7.6" r="1.03" fill="#000" opacity="0.40"/><circle cx="12.4" cy="7.0" r="1.37" fill="#000" opacity="0.40"/><circle cx="10.1" cy="6.4" r="0.75" fill="#000" opacity="0.40"/><circle cx="8.3" cy="11.0" r="1.09" fill="#000" opacity="0.40"/><circle cx="8.8" cy="12.1" r="0.63" fill="#000" opacity="0.40"/><circle cx="11.8" cy="6.7" r="0.96" fill="#000" opacity="0.40"/><circle cx="2.4" cy="4.7" r="0.92" fill="#000" opacity="0.40"/><circle cx="12.6" cy="6.5" r="1.03" fill="#000" opacity="0.40"/><circle cx="8.3" cy="8.4" r="0.94" fill="#000" opacity="0.40"/><circle cx="9.1" cy="8.8" r="1.30" fill="#000" opacity="0.40"/><circle cx="10.9" cy="12.0" r="1.23" fill="#000" opacity="0.40"/><circle cx="6.1" cy="7.4" r="1.02" fill="#000" opacity="0.40"/><circle cx="3.2" cy="6.4" r="0.61" fill="#000" opacity="0.40"/><circle cx="6.5" cy="7.5" r="0.78" fill="#000" opacity="0.40"/><circle cx="9.3" cy="6.1" r="1.25" fill="#000" opacity="0.70"/><circle cx="9.3" cy="4.1" r="1.15" fill="#000" opacity="0.70"/><circle cx="7.2" cy="7.0" r="1.21" fill="#000" opacity="0.70"/><circle cx="8.2" cy="6.4" r="1.23" fill="#000" opacity="0.70"/><circle cx="4.3" cy="9.2" r="1.36" fill="#000" opacity="0.70"/><circle cx="12.4" cy="5.2" r="1.01" fill="#000" opacity="0.70"/><circle cx="4.5" cy="6.7" r="1.47" fill="#000" opacity="0.70"/><circle cx="9.7" cy="9.3" r="1.15" fill="#000" opacity="0.70"/><circle cx="10.3" cy="9.2" r="0.86" fill="#000" opacity="0.70"/><circle cx="7.3" cy="5.4" r="1.52" fill="#000" opacity="0.70"/><circle cx="10.8" cy="11.1" r="1.33" fill="#000" opacity="0.70"/><circle cx="11.6" cy="11.7" r="1.57" fill="#000" opacity="0.70"/><circle cx="9.9" cy="13.3" r="1.12" fill="#000" opacity="0.70"/><circle cx="3.0" cy="9.0" r="1.47" fill="#000" opacity="0.70"/><circle cx="10.1" cy="10.3" r="1.21" fill="#000" opacity="0.70"/><circle cx="8.3" cy="9.6" r="1.05" fill="#000" opacity="0.70"/><circle cx="8.9" cy="8.1" r="1.24" fill="#000" opacity="0.70"/><circle cx="8.6" cy="8.6" r="1.07" fill="#000" opacity="0.70"/><circle cx="7.3" cy="6.8" r="0.85" fill="#000" opacity="0.70"/><circle cx="12.5" cy="8.2" r="1.58" fill="#000" opacity="0.70"/><circle cx="10.2" cy="9.5" r="0.83" fill="#000" opacity="0.70"/><circle cx="9.3" cy="6.9" r="0.90" fill="#000" opacity="0.70"/><circle cx="5.1" cy="10.6" r="1.46" fill="#000" opacity="0.70"/><circle cx="8.9" cy="9.6" r="1.54" fill="#000" opacity="0.70"/><circle cx="6.2" cy="7.2" r="0.87" fill="#000" opacity="0.70"/><circle cx="11.9" cy="9.6" r="1.14" fill="#000" opacity="0.70"/><circle cx="13.2" cy="10.6" r="1.31" fill="#000" opacity="0.70"/><circle cx="9.3" cy="7.7" r="1.48" fill="#000" opacity="0.70"/><circle cx="12.6" cy="10.1" r="1.16" fill="#000" opacity="0.70"/><circle cx="7.7" cy="10.7" r="1.54" fill="#000" opacity="0.70"/><path d="M26.0 0.5l2 5" stroke="#555" stroke-width=".8"/><circle cx="30.7" cy="14.0" r="0.46" fill="#000" opacity="0.60"/><circle cx="31.2" cy="13.8" r="0.35" fill="#000" opacity="0.60"/><circle cx="34.0" cy="12.5" r="0.39" fill="#000" opacity="0.60"/><circle cx="28.9" cy="17.2" r="0.39" fill="#000" opacity="0.60"/><circle cx="28.0" cy="11.5" r="0.40" fill="#000" opacity="0.60"/><circle cx="34.5" cy="11.9" r="0.30" fill="#000" opacity="0.60"/><circle cx="50.3" cy="1.9" r="0.39" fill="#000" opacity="0.75"/><circle cx="42.4" cy="9.9" r="0.35" fill="#000" opacity="0.75"/><circle cx="53.5" cy="3.1" r="0.55" fill="#000" opacity="0.75"/><circle cx="53.9" cy="3.6" r="0.55" fill="#000" opacity="0.75"/><circle cx="47.6" cy="0.3" r="0.47" fill="#000" opacity="0.75"/><circle cx="54.7" cy="1.9" r="0.62" fill="#000" opacity="0.75"/><circle cx="46.6" cy="11.5" r="0.33" fill="#000" opacity="0.75"/><circle cx="52.6" cy="10.2" r="0.67" fill="#000" opacity="0.75"/><circle cx="50.9" cy="12.1" r="0.34" fill="#000" opacity="0.75"/><circle cx="55.6" cy="1.4" r="0.64" fill="#000" opacity="0.75"/><circle cx="50.1" cy="12.8" r="0.45" fill="#000" opacity="0.75"/><circle cx="47.5" cy="9.4" r="0.52" fill="#000" opacity="0.75"/><circle cx="50.3" cy="17.3" r="0.79" fill="#000" opacity="0.75"/><circle cx="46.7" cy="7.2" r="0.78" fill="#000" opacity="0.75"/><circle cx="49.0" cy="13.5" r="0.30" fill="#000" opacity="0.75"/><circle cx="46.4" cy="12.7" r="0.55" fill="#000" opacity="0.75"/><circle cx="52.9" cy="14.6" r="0.30" fill="#000" opacity="0.75"/><circle cx="50.8" cy="11.2" r="0.50" fill="#000" opacity="0.75"/><circle cx="52.3" cy="8.8" r="0.45" fill="#000" opacity="0.75"/><circle cx="51.7" cy="15.3" r="0.56" fill="#000" opacity="0.75"/><circle cx="51.0" cy="1.2" r="0.66" fill="#000" opacity="0.75"/><circle cx="55.1" cy="4.6" r="0.46" fill="#000" opacity="0.75"/><circle cx="72.1" cy="8.2" r="0.73" fill="#000" opacity="0.80"/><circle cx="68.0" cy="7.2" r="0.80" fill="#000" opacity="0.80"/><circle cx="73.9" cy="4.5" r="0.74" fill="#000" opacity="0.80"/><circle cx="70.1" cy="5.7" r="0.61" fill="#000" opacity="0.80"/><circle cx="61.7" cy="8.3" r="0.78" fill="#000" opacity="0.80"/><circle cx="71.8" cy="3.1" r="0.84" fill="#000" opacity="0.80"/><circle cx="66.3" cy="2.4" r="0.44" fill="#000" opacity="0.80"/><circle cx="71.9" cy="9.1" r="0.52" fill="#000" opacity="0.80"/><circle cx="74.8" cy="13.0" r="0.64" fill="#000" opacity="0.80"/><circle cx="64.6" cy="3.9" r="0.71" fill="#000" opacity="0.80"/><circle cx="68.5" cy="8.5" r="0.78" fill="#000" opacity="0.80"/><circle cx="68.9" cy="2.8" r="0.62" fill="#000" opacity="0.80"/><circle cx="67.9" cy="6.8" r="0.74" fill="#000" opacity="0.80"/><circle cx="69.0" cy="10.7" r="0.46" fill="#000" opacity="0.80"/><circle cx="68.5" cy="4.9" r="0.74" fill="#000" opacity="0.80"/><circle cx="74.6" cy="7.6" r="0.53" fill="#000" opacity="0.80"/><circle cx="62.4" cy="9.4" r="0.76" fill="#000" opacity="0.80"/><circle cx="64.2" cy="4.2" r="0.35" fill="#000" opacity="0.80"/><circle cx="71.4" cy="11.7" r="0.75" fill="#000" opacity="0.80"/><circle cx="67.0" cy="14.2" r="0.31" fill="#000" opacity="0.80"/><circle cx="72.8" cy="10.0" r="0.70" fill="#000" opacity="0.80"/><circle cx="66.7" cy="2.4" r="0.47" fill="#000" opacity="0.80"/><circle cx="63.6" cy="7.9" r="0.58" fill="#000" opacity="0.80"/><circle cx="74.6" cy="13.6" r="0.42" fill="#000" opacity="0.80"/><circle cx="76.7" cy="7.4" r="0.31" fill="#000" opacity="0.80"/><circle cx="62.0" cy="10.3" r="0.88" fill="#000" opacity="0.80"/><circle cx="84.6" cy="10.0" r="0.38" fill="#000" opacity="0.60"/><circle cx="92.9" cy="7.1" r="0.53" fill="#000" opacity="0.60"/><circle cx="93.1" cy="13.6" r="0.68" fill="#000" opacity="0.60"/><circle cx="94.5" cy="14.5" r="0.50" fill="#000" opacity="0.60"/><circle cx="94.7" cy="3.6" r="0.39" fill="#000" opacity="0.60"/><circle cx="94.0" cy="4.7" r="0.31" fill="#000" opacity="0.60"/><circle cx="95.3" cy="8.6" r="0.48" fill="#000" opacity="0.60"/><circle cx="87.9" cy="11.7" r="0.44" fill="#000" opacity="0.60"/><circle cx="85.7" cy="16.0" r="0.30" fill="#000" opacity="0.60"/><circle cx="89.0" cy="0.3" r="0.35" fill="#000" opacity="0.60"/><circle cx="95.8" cy="5.1" r="0.66" fill="#000" opacity="0.60"/><circle cx="87.6" cy="13.8" r="0.46" fill="#000" opacity="0.60"/><circle cx="95.9" cy="8.4" r="0.44" fill="#000" opacity="0.60"/><circle cx="84.8" cy="10.6" r="0.32" fill="#000" opacity="0.60"/><circle cx="95.6" cy="13.4" r="0.41" fill="#000" opacity="0.60"/><circle cx="93.1" cy="6.7" r="0.41" fill="#000" opacity="0.60"/><circle cx="85.1" cy="8.2" r="0.45" fill="#000" opacity="0.60"/><circle cx="97.1" cy="6.2" r="0.62" fill="#000" opacity="0.60"/><circle cx="83.1" cy="2.2" r="0.68" fill="#000" opacity="0.60"/><circle cx="81.7" cy="6.2" r="0.32" fill="#000" opacity="0.60"/><circle cx="88.3" cy="2.5" r="0.60" fill="#000" opacity="0.60"/><circle cx="86.0" cy="4.7" r="0.32" fill="#000" opacity="0.60"/><circle cx="10.6" cy="27.7" r="0.63" fill="#000" opacity="0.50"/><circle cx="7.4" cy="30.9" r="0.82" fill="#000" opacity="0.50"/><circle cx="11.7" cy="28.1" r="0.76" fill="#000" opacity="0.50"/><circle cx="7.6" cy="32.7" r="0.58" fill="#000" opacity="0.50"/><circle cx="10.0" cy="30.3" r="0.45" fill="#000" opacity="0.50"/><circle cx="12.4" cy="26.2" r="0.45" fill="#000" opacity="0.50"/><circle cx="18.8" cy="22.0" r="0.61" fill="#000" opacity="0.50"/><circle cx="10.5" cy="30.3" r="0.36" fill="#000" opacity="0.50"/><circle cx="8.2" cy="29.8" r="0.47" fill="#000" opacity="0.50"/><circle cx="8.8" cy="33.0" r="0.92" fill="#000" opacity="0.50"/><circle cx="9.0" cy="24.9" r="0.59" fill="#000" opacity="0.50"/><circle cx="5.6" cy="28.0" r="0.54" fill="#000" opacity="0.50"/><circle cx="11.6" cy="29.6" r="0.98" fill="#000" opacity="0.50"/><circle cx="11.9" cy="31.4" r="0.74" fill="#000" opacity="0.50"/><circle cx="10.6" cy="26.6" r="0.49" fill="#000" opacity="0.50"/><circle cx="9.0" cy="32.0" r="0.61" fill="#000" opacity="0.50"/><circle cx="15.5" cy="26.6" r="0.91" fill="#000" opacity="0.50"/><circle cx="9.9" cy="28.6" r="0.80" fill="#000" opacity="0.50"/><circle cx="12.1" cy="26.1" r="0.71" fill="#000" opacity="0.50"/><circle cx="12.5" cy="28.5" r="0.95" fill="#000" opacity="0.50"/><circle cx="12.1" cy="22.4" r="0.98" fill="#000" opacity="0.50"/><circle cx="9.0" cy="30.2" r="0.41" fill="#000" opacity="0.50"/><circle cx="3.8" cy="27.8" r="0.96" fill="#000" opacity="0.50"/><circle cx="8.1" cy="23.5" r="0.84" fill="#000" opacity="0.50"/><circle cx="4.7" cy="29.7" r="0.33" fill="#000" opacity="0.50"/><circle cx="9.5" cy="26.0" r="0.94" fill="#000" opacity="0.50"/><circle cx="7.2" cy="26.1" r="0.39" fill="#000" opacity="0.50"/><circle cx="8.9" cy="33.5" r="0.79" fill="#000" opacity="0.50"/><circle cx="10.0" cy="29.4" r="0.67" fill="#000" opacity="0.50"/><circle cx="6.0" cy="26.8" r="0.46" fill="#000" opacity="0.50"/><circle cx="8.6" cy="28.2" r="0.51" fill="#000" opacity="0.50"/><circle cx="0.4" cy="30.7" r="0.75" fill="#000" opacity="0.50"/><circle cx="12.0" cy="25.8" r="0.46" fill="#000" opacity="0.50"/><circle cx="9.2" cy="37.4" r="0.79" fill="#000" opacity="0.50"/><circle cx="8.7" cy="29.2" r="0.65" fill="#000" opacity="0.50"/><circle cx="7.3" cy="25.3" r="0.48" fill="#000" opacity="0.50"/><circle cx="5.0" cy="21.6" r="0.46" fill="#000" opacity="0.50"/><circle cx="12.1" cy="29.2" r="0.59" fill="#000" opacity="0.50"/><circle cx="8.0" cy="26.4" r="0.86" fill="#000" opacity="0.50"/><circle cx="8.7" cy="24.4" r="0.44" fill="#000" opacity="0.50"/><circle cx="12.0" cy="27.9" r="0.87" fill="#000" opacity="0.50"/><circle cx="9.3" cy="31.0" r="0.83" fill="#000" opacity="0.50"/><circle cx="6.6" cy="36.8" r="0.65" fill="#000" opacity="0.50"/><circle cx="10.0" cy="30.8" r="0.59" fill="#000" opacity="0.50"/><circle cx="4.7" cy="21.1" r="0.40" fill="#000" opacity="0.50"/><circle cx="7.1" cy="30.0" r="0.98" fill="#000" opacity="0.50"/><circle cx="9.7" cy="29.4" r="0.34" fill="#000" opacity="0.50"/><circle cx="3.1" cy="33.1" r="0.92" fill="#000" opacity="0.50"/><circle cx="7.7" cy="16.4" r="0.95" fill="#000" opacity="0.50"/><circle cx="7.9" cy="30.5" r="0.96" fill="#000" opacity="0.50"/><circle cx="9.0" cy="27.6" r="0.77" fill="#000" opacity="0.50"/><circle cx="6.6" cy="30.8" r="0.53" fill="#000" opacity="0.50"/><circle cx="9.1" cy="28.7" r="0.50" fill="#000" opacity="0.50"/><circle cx="3.8" cy="35.5" r="0.39" fill="#000" opacity="0.50"/><circle cx="11.3" cy="28.0" r="0.55" fill="#000" opacity="0.50"/><circle cx="11.8" cy="22.6" r="0.60" fill="#000" opacity="0.50"/><circle cx="12.8" cy="29.7" r="0.56" fill="#000" opacity="0.50"/><circle cx="11.0" cy="27.4" r="0.55" fill="#000" opacity="0.50"/><circle cx="9.7" cy="28.0" r="0.59" fill="#000" opacity="0.50"/><circle cx="11.3" cy="23.0" r="0.33" fill="#000" opacity="0.50"/><circle cx="10.2" cy="28.8" r="0.94" fill="#000" opacity="0.50"/><circle cx="8.7" cy="34.3" r="0.93" fill="#000" opacity="0.50"/><circle cx="7.5" cy="30.9" r="0.97" fill="#000" opacity="0.50"/><circle cx="7.0" cy="26.7" r="0.80" fill="#000" opacity="0.50"/><circle cx="7.9" cy="31.1" r="0.30" fill="#000" opacity="0.50"/><circle cx="9.3" cy="20.7" r="0.74" fill="#000" opacity="0.50"/><circle cx="9.7" cy="28.2" r="0.46" fill="#000" opacity="0.50"/><circle cx="0.3" cy="29.9" r="0.97" fill="#000" opacity="0.50"/><circle cx="7.0" cy="30.2" r="0.60" fill="#000" opacity="0.50"/><circle cx="1.0" cy="28.8" r="0.43" fill="#000" opacity="0.50"/><path d="M9.0 28.5L15.7 30.6" stroke="#666" stroke-width=".5"/><path d="M9.0 28.5L11.5 35.0" stroke="#666" stroke-width=".5"/><path d="M9.0 28.5L4.9 34.2" stroke="#666" stroke-width=".5"/><path d="M9.0 28.5L2.0 28.8" stroke="#666" stroke-width=".5"/><path d="M9.0 28.5L4.4 23.2" stroke="#666" stroke-width=".5"/><path d="M9.0 28.5L11.0 21.8" stroke="#666" stroke-width=".5"/><path d="M9.0 28.5L15.2 25.2" stroke="#666" stroke-width=".5"/><ellipse cx="30.0" cy="29.5" rx="8.0" ry="8.0" fill="#222"/><circle cx="32.2" cy="23.0" r="0.71" fill="#fff"/><circle cx="30.9" cy="23.3" r="0.46" fill="#fff"/><circle cx="28.0" cy="33.9" r="0.69" fill="#fff"/><circle cx="33.1" cy="31.2" r="0.68" fill="#fff"/><circle cx="30.0" cy="31.5" r="0.32" fill="#fff"/><circle cx="25.7" cy="28.0" r="0.79" fill="#fff"/><circle cx="35.9" cy="24.2" r="0.43" fill="#fff"/><circle cx="32.1" cy="30.8" r="0.55" fill="#fff"/><circle cx="28.7" cy="24.3" r="0.42" fill="#fff"/><circle cx="24.5" cy="32.6" r="0.64" fill="#fff"/><circle cx="29.9" cy="22.1" r="0.63" fill="#fff"/><circle cx="35.3" cy="34.6" r="0.45" fill="#fff"/><circle cx="25.5" cy="27.5" r="0.67" fill="#fff"/><circle cx="31.2" cy="33.3" r="0.42" fill="#fff"/><circle cx="34.3" cy="35.7" r="0.59" fill="#fff"/><circle cx="27.7" cy="34.0" r="0.80" fill="#fff"/><circle cx="26.2" cy="29.3" r="0.70" fill="#fff"/><circle cx="25.5" cy="23.0" r="0.35" fill="#fff"/><circle cx="22.9" cy="30.6" r="0.72" fill="#fff"/><circle cx="31.4" cy="28.7" r="0.45" fill="#fff"/><circle cx="32.6" cy="31.9" r="0.79" fill="#fff"/><circle cx="23.3" cy="25.6" r="0.49" fill="#fff"/><circle cx="33.6" cy="25.5" r="0.43" fill="#fff"/><circle cx="31.3" cy="21.8" r="0.35" fill="#fff"/><circle cx="24.8" cy="25.9" r="0.41" fill="#fff"/><circle cx="28.0" cy="31.7" r="0.40" fill="#fff"/><circle cx="29.8" cy="35.7" r="0.63" fill="#fff"/><circle cx="30.2" cy="30.3" r="0.46" fill="#fff"/><circle cx="28.5" cy="26.4" r="0.46" fill="#fff"/><circle cx="32.1" cy="36.3" r="0.57" fill="#fff"/><circle cx="32.3" cy="30.5" r="0.50" fill="#fff"/><circle cx="23.9" cy="27.5" r="0.35" fill="#fff"/><circle cx="33.4" cy="35.2" r="0.50" fill="#fff"/><circle cx="29.1" cy="33.8" r="0.78" fill="#fff"/><circle cx="27.7" cy="35.1" r="0.48" fill="#fff"/><circle cx="23.6" cy="33.2" r="0.80" fill="#fff"/><circle cx="27.7" cy="32.2" r="0.66" fill="#fff"/><circle cx="30.2" cy="30.1" r="0.75" fill="#fff"/><circle cx="23.6" cy="32.8" r="0.50" fill="#fff"/><circle cx="34.0" cy="25.9" r="0.38" fill="#fff"/><circle cx="35.9" cy="30.1" r="0.62" fill="#fff"/><circle cx="32.0" cy="28.2" r="0.61" fill="#fff"/><circle cx="26.1" cy="33.6" r="0.37" fill="#fff"/><circle cx="28.8" cy="35.1" r="0.76" fill="#fff"/><circle cx="34.3" cy="33.0" r="0.70" fill="#fff"/><circle cx="33.5" cy="28.8" r="0.36" fill="#fff"/><circle cx="37.4" cy="26.7" r="0.54" fill="#fff"/><circle cx="37.3" cy="32.0" r="0.49" fill="#fff"/><circle cx="35.2" cy="25.9" r="0.71" fill="#fff"/><circle cx="33.8" cy="35.5" r="0.41" fill="#fff"/><circle cx="23.9" cy="33.7" r="0.71" fill="#fff"/><circle cx="31.5" cy="32.9" r="0.50" fill="#fff"/><circle cx="25.1" cy="28.9" r="0.36" fill="#fff"/><circle cx="30.1" cy="36.3" r="0.75" fill="#fff"/><circle cx="35.8" cy="31.0" r="0.68" fill="#fff"/><circle cx="37.1" cy="31.2" r="0.36" fill="#fff"/><circle cx="25.2" cy="26.0" r="0.61" fill="#fff"/><circle cx="28.2" cy="34.4" r="0.59" fill="#fff"/><circle cx="24.2" cy="32.4" r="0.52" fill="#fff"/><circle cx="28.9" cy="30.0" r="0.61" fill="#fff"/><circle cx="26.1" cy="29.8" r="0.68" fill="#fff"/><circle cx="31.0" cy="24.2" r="0.39" fill="#fff"/><circle cx="27.4" cy="29.9" r="0.36" fill="#fff"/><circle cx="27.8" cy="30.5" r="0.52" fill="#fff"/><circle cx="28.4" cy="29.4" r="0.62" fill="#fff"/><circle cx="36.0" cy="32.9" r="0.69" fill="#fff"/><circle cx="28.1" cy="29.4" r="0.55" fill="#fff"/><circle cx="24.4" cy="34.9" r="0.37" fill="#fff"/><circle cx="35.0" cy="23.3" r="0.67" fill="#fff"/><circle cx="31.4" cy="26.3" r="0.79" fill="#fff"/><circle cx="22.2" cy="29.9" r="0.76" fill="#fff"/><circle cx="33.6" cy="35.6" r="0.77" fill="#fff"/><circle cx="34.3" cy="31.4" r="0.68" fill="#fff"/><circle cx="34.1" cy="35.9" r="0.44" fill="#fff"/><circle cx="31.2" cy="26.7" r="0.55" fill="#fff"/><circle cx="33.2" cy="27.7" r="0.43" fill="#fff"/><circle cx="25.5" cy="29.3" r="0.32" fill="#fff"/><circle cx="31.3" cy="32.4" r="0.77" fill="#fff"/><circle cx="26.8" cy="22.7" r="0.38" fill="#fff"/><circle cx="30.6" cy="26.9" r="0.57" fill="#fff"/><circle cx="26.9" cy="25.9" r="0.74" fill="#fff"/><circle cx="24.3" cy="27.4" r="0.74" fill="#fff"/><circle cx="36.3" cy="34.4" r="0.61" fill="#fff"/><circle cx="24.4" cy="33.9" r="0.43" fill="#fff"/><circle cx="36.1" cy="29.1" r="0.48" fill="#fff"/><circle cx="30.5" cy="24.2" r="0.39" fill="#fff"/><circle cx="29.9" cy="27.7" r="0.71" fill="#fff"/><circle cx="29.9" cy="35.9" r="0.79" fill="#fff"/><circle cx="24.4" cy="26.2" r="0.46" fill="#fff"/><circle cx="31.5" cy="29.5" r="0.37" fill="#fff"/><circle cx="26.1" cy="26.0" r="0.56" fill="#fff"/><circle cx="32.3" cy="27.7" r="0.41" fill="#fff"/><circle cx="29.3" cy="28.5" r="0.30" fill="#fff"/><circle cx="28.4" cy="31.6" r="0.48" fill="#fff"/><circle cx="31.0" cy="35.5" r="0.59" fill="#fff"/><circle cx="31.8" cy="35.6" r="0.54" fill="#fff"/><circle cx="35.1" cy="35.3" r="0.42" fill="#fff"/><circle cx="31.5" cy="31.5" r="0.62" fill="#fff"/><circle cx="34.9" cy="24.4" r="0.50" fill="#fff"/><circle cx="29.9" cy="30.4" r="0.62" fill="#fff"/><circle cx="25.6" cy="27.7" r="0.62" fill="#fff"/><circle cx="22.7" cy="32.2" r="0.67" fill="#fff"/><circle cx="30.1" cy="37.1" r="0.32" fill="#fff"/><circle cx="25.0" cy="28.5" r="0.42" fill="#fff"/><circle cx="36.6" cy="32.0" r="0.31" fill="#fff"/><circle cx="22.6" cy="27.1" r="0.37" fill="#fff"/><circle cx="31.9" cy="35.4" r="0.55" fill="#fff"/><circle cx="25.5" cy="23.9" r="0.39" fill="#fff"/><circle cx="28.4" cy="33.6" r="0.32" fill="#fff"/><circle cx="35.4" cy="25.0" r="0.66" fill="#fff"/><circle cx="37.3" cy="29.8" r="0.67" fill="#fff"/><circle cx="23.3" cy="31.0" r="0.53" fill="#fff"/><circle cx="30.4" cy="32.1" r="0.42" fill="#fff"/><circle cx="34.5" cy="30.6" r="0.67" fill="#fff"/><circle cx="27.5" cy="22.6" r="0.66" fill="#fff"/><circle cx="29.4" cy="35.4" r="0.52" fill="#fff"/><circle cx="31.4" cy="23.9" r="0.43" fill="#fff"/><circle cx="25.1" cy="23.4" r="0.41" fill="#fff"/><circle cx="30.7" cy="28.8" r="0.43" fill="#fff"/><circle cx="30.6" cy="36.4" r="0.77" fill="#fff"/><circle cx="29.9" cy="24.9" r="0.74" fill="#fff"/><circle cx="28.1" cy="32.9" r="0.75" fill="#fff"/><circle cx="25.5" cy="24.6" r="0.63" fill="#fff"/><circle cx="35.4" cy="28.8" r="0.72" fill="#fff"/><circle cx="27.6" cy="22.5" r="0.52" fill="#fff"/><circle cx="29.0" cy="23.5" r="0.45" fill="#fff"/><circle cx="31.5" cy="35.6" r="0.34" fill="#fff"/><circle cx="32.6" cy="27.9" r="0.31" fill="#fff"/><circle cx="36.0" cy="34.3" r="0.47" fill="#fff"/><circle cx="30.9" cy="30.6" r="0.32" fill="#fff"/><circle cx="27.8" cy="23.5" r="0.65" fill="#fff"/><circle cx="29.8" cy="27.5" r="0.60" fill="#fff"/><circle cx="25.3" cy="35.0" r="0.71" fill="#fff"/><circle cx="31.6" cy="28.2" r="0.73" fill="#fff"/><circle cx="36.7" cy="25.5" r="0.35" fill="#fff"/><circle cx="30.7" cy="32.1" r="0.32" fill="#fff"/><circle cx="34.2" cy="23.6" r="0.62" fill="#fff"/><circle cx="32.9" cy="23.8" r="0.44" fill="#fff"/><circle cx="32.0" cy="31.0" r="0.68" fill="#fff"/><circle cx="31.3" cy="33.8" r="0.51" fill="#fff"/><ellipse cx="50.0" cy="29.5" rx="8.0" ry="8.0" fill="#333"/><circle cx="54.0" cy="30.0" r="0.43" fill="#fff"/><circle cx="49.0" cy="24.8" r="0.44" fill="#fff"/><circle cx="55.5" cy="28.2" r="0.68" fill="#fff"/><circle cx="49.0" cy="28.5" r="0.49" fill="#fff"/><circle cx="43.5" cy="32.2" r="0.46" fill="#fff"/><circle cx="48.4" cy="23.9" r="0.40" fill="#fff"/><circle cx="51.6" cy="27.7" r="0.67" fill="#fff"/><circle cx="50.1" cy="29.8" r="0.39" fill="#fff"/><circle cx="50.6" cy="21.6" r="0.30" fill="#fff"/><circle cx="44.4" cy="29.8" r="0.66" fill="#fff"/><circle cx="52.3" cy="34.7" r="0.46" fill="#fff"/><circle cx="52.0" cy="25.9" r="0.72" fill="#fff"/><circle cx="49.2" cy="33.1" r="0.61" fill="#fff"/><circle cx="47.3" cy="29.5" r="0.59" fill="#fff"/><circle cx="56.2" cy="33.0" r="0.61" fill="#fff"/><circle cx="51.5" cy="23.3" r="0.46" fill="#fff"/><circle cx="45.9" cy="32.4" r="0.70" fill="#fff"/><circle cx="56.5" cy="33.4" r="0.31" fill="#fff"/><circle cx="51.1" cy="33.4" r="0.71" fill="#fff"/><circle cx="45.1" cy="29.5" r="0.70" fill="#fff"/><circle cx="50.6" cy="34.9" r="0.54" fill="#fff"/><circle cx="50.2" cy="22.6" r="0.59" fill="#fff"/><circle cx="47.3" cy="33.2" r="0.37" fill="#fff"/><circle cx="53.6" cy="24.1" r="0.63" fill="#fff"/><circle cx="52.6" cy="34.1" r="0.65" fill="#fff"/><circle cx="47.5" cy="28.1" r="0.51" fill="#fff"/><circle cx="52.9" cy="26.9" r="0.39" fill="#fff"/><circle cx="47.9" cy="35.9" r="0.68" fill="#fff"/><circle cx="51.8" cy="32.1" r="0.41" fill="#fff"/><circle cx="47.3" cy="34.6" r="0.37" fill="#fff"/><circle cx="48.4" cy="32.6" r="0.74" fill="#fff"/><circle cx="49.7" cy="27.0" r="0.73" fill="#fff"/><circle cx="54.0" cy="32.5" r="0.74" fill="#fff"/><circle cx="51.9" cy="22.9" r="0.50" fill="#fff"/><circle cx="52.1" cy="35.5" r="0.35" fill="#fff"/><circle cx="51.3" cy="34.3" r="0.32" fill="#fff"/><circle cx="44.3" cy="33.7" r="0.61" fill="#fff"/><circle cx="43.6" cy="29.5" r="0.51" fill="#fff"/><circle cx="53.9" cy="34.3" r="0.48" fill="#fff"/><circle cx="49.6" cy="21.9" r="0.49" fill="#fff"/><circle cx="43.8" cy="26.4" r="0.49" fill="#fff"/><circle cx="50.9" cy="36.2" r="0.70" fill="#fff"/><circle cx="51.0" cy="22.9" r="0.68" fill="#fff"/><circle cx="47.3" cy="23.7" r="0.50" fill="#fff"/><circle cx="47.6" cy="35.4" r="0.34" fill="#fff"/><circle cx="43.8" cy="32.9" r="0.62" fill="#fff"/><circle cx="47.3" cy="26.6" r="0.49" fill="#fff"/><circle cx="43.9" cy="31.3" r="0.48" fill="#fff"/><circle cx="46.5" cy="22.6" r="0.38" fill="#fff"/><circle cx="46.0" cy="23.7" r="0.47" fill="#fff"/><circle cx="42.1" cy="30.0" r="0.32" fill="#fff"/><circle cx="46.9" cy="28.6" r="0.65" fill="#fff"/><circle cx="55.4" cy="27.4" r="0.35" fill="#fff"/><circle cx="44.7" cy="26.8" r="0.62" fill="#fff"/><circle cx="43.6" cy="29.0" r="0.67" fill="#fff"/><circle cx="44.9" cy="28.8" r="0.73" fill="#fff"/><circle cx="51.6" cy="35.9" r="0.48" fill="#fff"/><circle cx="50.2" cy="26.7" r="0.74" fill="#fff"/><circle cx="48.8" cy="31.0" r="0.42" fill="#fff"/><circle cx="49.3" cy="30.0" r="0.49" fill="#fff"/><circle cx="44.1" cy="32.7" r="0.46" fill="#fff"/><circle cx="49.6" cy="33.3" r="0.63" fill="#fff"/><circle cx="55.4" cy="27.4" r="0.40" fill="#fff"/><circle cx="51.6" cy="24.8" r="0.40" fill="#fff"/><circle cx="54.8" cy="34.6" r="0.66" fill="#fff"/><circle cx="46.4" cy="25.4" r="0.55" fill="#fff"/><circle cx="51.2" cy="37.3" r="0.46" fill="#fff"/><circle cx="45.3" cy="24.0" r="0.67" fill="#fff"/><circle cx="45.7" cy="30.4" r="0.55" fill="#fff"/><circle cx="55.2" cy="34.7" r="0.46" fill="#fff"/><circle cx="52.4" cy="26.2" r="0.47" fill="#fff"/><circle cx="49.9" cy="34.7" r="0.38" fill="#fff"/><circle cx="56.8" cy="29.6" r="0.43" fill="#fff"/><circle cx="50.1" cy="33.9" r="0.52" fill="#fff"/><circle cx="44.2" cy="32.3" r="0.60" fill="#fff"/><circle cx="45.0" cy="35.4" r="0.68" fill="#fff"/><circle cx="56.8" cy="32.1" r="0.71" fill="#fff"/><circle cx="50.6" cy="26.6" r="0.67" fill="#fff"/><circle cx="49.3" cy="28.8" r="0.31" fill="#fff"/><circle cx="56.2" cy="27.6" r="0.41" fill="#fff"/><circle cx="52.4" cy="31.3" r="0.41" fill="#fff"/><circle cx="50.8" cy="24.9" r="0.37" fill="#fff"/><circle cx="55.9" cy="25.5" r="0.38" fill="#fff"/><circle cx="54.8" cy="25.6" r="0.65" fill="#fff"/><circle cx="46.3" cy="22.9" r="0.65" fill="#fff"/><circle cx="51.9" cy="26.5" r="0.61" fill="#fff"/><circle cx="43.2" cy="28.2" r="0.50" fill="#fff"/><circle cx="54.4" cy="25.5" r="0.42" fill="#fff"/><circle cx="50.3" cy="32.5" r="0.52" fill="#fff"/><circle cx="55.1" cy="31.5" r="0.36" fill="#fff"/><circle cx="44.4" cy="29.8" r="0.54" fill="#fff"/><circle cx="50.4" cy="29.0" r="0.68" fill="#fff"/><circle cx="44.1" cy="30.7" r="0.60" fill="#fff"/><circle cx="52.6" cy="25.4" r="0.49" fill="#fff"/><circle cx="52.1" cy="29.0" r="0.59" fill="#fff"/><circle cx="49.1" cy="28.5" r="0.57" fill="#fff"/><circle cx="46.8" cy="22.5" r="0.45" fill="#fff"/><circle cx="55.7" cy="28.8" r="0.52" fill="#fff"/><circle cx="51.2" cy="28.6" r="0.62" fill="#fff"/><circle cx="46.7" cy="26.2" r="0.69" fill="#fff"/><circle cx="46.3" cy="33.6" r="0.54" fill="#fff"/><circle cx="50.5" cy="25.9" r="0.50" fill="#fff"/><circle cx="44.7" cy="32.3" r="0.67" fill="#fff"/><circle cx="48.1" cy="36.5" r="0.48" fill="#fff"/><circle cx="45.8" cy="29.4" r="0.53" fill="#fff"/><circle cx="56.4" cy="28.5" r="0.66" fill="#fff"/><circle cx="47.8" cy="33.4" r="0.43" fill="#fff"/><circle cx="44.5" cy="26.2" r="0.65" fill="#fff"/><circle cx="56.6" cy="31.2" r="0.70" fill="#fff"/><circle cx="48.3" cy="29.0" r="0.44" fill="#fff"/><circle cx="53.5" cy="29.6" r="0.71" fill="#fff"/><circle cx="45.0" cy="25.4" r="0.66" fill="#fff"/><circle cx="55.3" cy="26.1" r="0.58" fill="#fff"/><circle cx="45.3" cy="24.7" r="0.57" fill="#fff"/><circle cx="48.4" cy="26.2" r="0.60" fill="#fff"/><circle cx="43.3" cy="31.3" r="0.35" fill="#fff"/><circle cx="50.6" cy="30.9" r="0.65" fill="#fff"/><circle cx="55.6" cy="26.2" r="0.47" fill="#fff"/><circle cx="53.1" cy="23.1" r="0.55" fill="#fff"/><circle cx="49.8" cy="33.9" r="0.49" fill="#fff"/><circle cx="47.8" cy="34.3" r="0.59" fill="#fff"/><circle cx="51.7" cy="28.7" r="0.56" fill="#fff"/><circle cx="52.7" cy="30.2" r="0.66" fill="#fff"/><circle cx="43.2" cy="26.0" r="0.50" fill="#fff"/><circle cx="55.0" cy="29.9" r="0.57" fill="#fff"/><circle cx="57.3" cy="26.5" r="0.51" fill="#fff"/><circle cx="47.8" cy="30.8" r="0.59" fill="#fff"/><circle cx="50.7" cy="32.5" r="0.31" fill="#fff"/><circle cx="56.6" cy="29.7" r="0.35" fill="#fff"/><circle cx="52.3" cy="29.0" r="0.69" fill="#fff"/><ellipse cx="70.0" cy="29.5" rx="8.0" ry="8.0" fill="#222"/><circle cx="70.7" cy="30.3" r="0.66" fill="#fff"/><circle cx="70.3" cy="36.3" r="0.39" fill="#fff"/><circle cx="76.7" cy="31.7" r="0.66" fill="#fff"/><circle cx="74.2" cy="24.1" r="0.34" fill="#fff"/><circle cx="65.3" cy="24.6" r="0.53" fill="#fff"/><circle cx="73.7" cy="27.8" r="0.78" fill="#fff"/><circle cx="69.8" cy="28.7" r="0.31" fill="#fff"/><circle cx="65.8" cy="23.6" r="0.34" fill="#fff"/><circle cx="67.4" cy="35.8" r="0.38" fill="#fff"/><circle cx="73.6" cy="25.2" r="0.33" fill="#fff"/><circle cx="65.9" cy="34.0" r="0.52" fill="#fff"/><circle cx="68.6" cy="26.8" r="0.70" fill="#fff"/><circle cx="65.8" cy="34.4" r="0.61" fill="#fff"/><circle cx="65.7" cy="31.9" r="0.69" fill="#fff"/><circle cx="76.7" cy="27.1" r="0.58" fill="#fff"/><circle cx="69.5" cy="31.4" r="0.79" fill="#fff"/><circle cx="67.9" cy="22.5" r="0.47" fill="#fff"/><circle cx="63.8" cy="24.6" r="0.72" fill="#fff"/><circle cx="66.4" cy="26.9" r="0.51" fill="#fff"/><circle cx="73.7" cy="26.3" r="0.64" fill="#fff"/><circle cx="63.9" cy="25.0" r="0.70" fill="#fff"/><circle cx="69.9" cy="29.8" r="0.43" fill="#fff"/><circle cx="64.6" cy="32.4" r="0.71" fill="#fff"/><circle cx="71.3" cy="28.4" r="0.72" fill="#fff"/><circle cx="72.8" cy="22.6" r="0.59" fill="#fff"/><circle cx="68.9" cy="36.8" r="0.70" fill="#fff"/><circle cx="66.9" cy="22.5" r="0.47" fill="#fff"/><circle cx="75.1" cy="32.5" r="0.70" fill="#fff"/><circle cx="72.1" cy="36.1" r="0.77" fill="#fff"/><circle cx="70.6" cy="35.7" r="0.64" fill="#fff"/><circle cx="66.4" cy="30.3" r="0.43" fill="#fff"/><circle cx="70.0" cy="22.4" r="0.53" fill="#fff"/><circle cx="76.1" cy="33.3" r="0.69" fill="#fff"/><circle cx="70.7" cy="35.6" r="0.75" fill="#fff"/><circle cx="74.3" cy="25.7" r="0.54" fill="#fff"/><circle cx="67.1" cy="27.6" r="0.40" fill="#fff"/><circle cx="72.8" cy="35.6" r="0.48" fill="#fff"/><circle cx="65.3" cy="27.5" r="0.56" fill="#fff"/><circle cx="71.0" cy="30.9" r="0.80" fill="#fff"/><circle cx="68.2" cy="31.4" r="0.62" fill="#fff"/><circle cx="70.7" cy="26.4" r="0.60" fill="#fff"/><circle cx="66.8" cy="34.3" r="0.31" fill="#fff"/><circle cx="77.8" cy="31.2" r="0.73" fill="#fff"/><circle cx="64.0" cy="30.0" r="0.43" fill="#fff"/><circle cx="71.0" cy="24.4" r="0.77" fill="#fff"/><circle cx="70.8" cy="22.3" r="0.78" fill="#fff"/><circle cx="70.0" cy="31.1" r="0.40" fill="#fff"/><circle cx="71.0" cy="31.6" r="0.33" fill="#fff"/><circle cx="63.0" cy="26.9" r="0.53" fill="#fff"/><circle cx="77.2" cy="27.0" r="0.33" fill="#fff"/><circle cx="65.9" cy="26.6" r="0.36" fill="#fff"/><circle cx="73.9" cy="28.5" r="0.58" fill="#fff"/><circle cx="65.0" cy="23.5" r="0.63" fill="#fff"/><circle cx="65.8" cy="32.8" r="0.38" fill="#fff"/><circle cx="77.8" cy="27.8" r="0.41" fill="#fff"/><circle cx="73.9" cy="30.5" r="0.48" fill="#fff"/><circle cx="76.2" cy="25.1" r="0.72" fill="#fff"/><circle cx="76.8" cy="31.6" r="0.65" fill="#fff"/><circle cx="65.2" cy="23.2" r="0.33" fill="#fff"/><circle cx="74.3" cy="35.0" r="0.77" fill="#fff"/><circle cx="68.1" cy="25.6" r="0.60" fill="#fff"/><circle cx="70.1" cy="26.9" r="0.46" fill="#fff"/><circle cx="69.9" cy="32.3" r="0.54" fill="#fff"/><circle cx="71.9" cy="32.9" r="0.37" fill="#fff"/><circle cx="69.6" cy="28.7" r="0.66" fill="#fff"/><circle cx="70.5" cy="30.9" r="0.76" fill="#fff"/><circle cx="71.4" cy="37.1" r="0.73" fill="#fff"/><circle cx="72.3" cy="27.6" r="0.52" fill="#fff"/><circle cx="76.3" cy="33.9" r="0.72" fill="#fff"/><circle cx="66.3" cy="25.6" r="0.47" fill="#fff"/><circle cx="72.4" cy="24.5" r="0.61" fill="#fff"/><circle cx="72.4" cy="32.4" r="0.33" fill="#fff"/><circle cx="68.7" cy="23.7" r="0.37" fill="#fff"/><circle cx="72.8" cy="26.5" r="0.51" fill="#fff"/><circle cx="72.3" cy="33.0" r="0.72" fill="#fff"/><circle cx="68.3" cy="32.3" r="0.55" fill="#fff"/><circle cx="66.8" cy="36.4" r="0.36" fill="#fff"/><circle cx="71.9" cy="29.2" r="0.75" fill="#fff"/><circle cx="68.2" cy="26.3" r="0.54" fill="#fff"/><circle cx="69.1" cy="33.5" r="0.40" fill="#fff"/><circle cx="64.8" cy="35.5" r="0.80" fill="#fff"/><circle cx="72.2" cy="28.4" r="0.44" fill="#fff"/><circle cx="71.5" cy="28.3" r="0.66" fill="#fff"/><circle cx="67.9" cy="37.1" r="0.31" fill="#fff"/><circle cx="71.6" cy="25.1" r="0.37" fill="#fff"/><circle cx="77.3" cy="29.6" r="0.56" fill="#fff"/><circle cx="72.1" cy="34.4" r="0.76" fill="#fff"/><circle cx="71.2" cy="35.4" r="0.37" fill="#fff"/><circle cx="73.0" cy="35.9" r="0.66" fill="#fff"/><circle cx="70.7" cy="31.6" r="0.34" fill="#fff"/><circle cx="65.6" cy="26.0" r="0.44" fill="#fff"/><circle cx="71.7" cy="35.5" r="0.65" fill="#fff"/><circle cx="72.3" cy="23.8" r="0.40" fill="#fff"/><circle cx="76.3" cy="32.2" r="0.50" fill="#fff"/><circle cx="69.7" cy="27.6" r="0.71" fill="#fff"/><circle cx="66.3" cy="35.8" r="0.73" fill="#fff"/><circle cx="69.0" cy="29.5" r="0.76" fill="#fff"/><circle cx="62.6" cy="30.6" r="0.43" fill="#fff"/><circle cx="72.9" cy="36.2" r="0.48" fill="#fff"/><circle cx="72.5" cy="33.7" r="0.60" fill="#fff"/><circle cx="75.8" cy="29.7" r="0.52" fill="#fff"/><circle cx="67.2" cy="29.2" r="0.66" fill="#fff"/><circle cx="73.0" cy="22.7" r="0.46" fill="#fff"/><circle cx="68.8" cy="24.7" r="0.68" fill="#fff"/><circle cx="76.9" cy="32.3" r="0.78" fill="#fff"/><circle cx="64.3" cy="29.7" r="0.57" fill="#fff"/><circle cx="68.9" cy="29.2" r="0.78" fill="#fff"/><circle cx="70.6" cy="32.9" r="0.35" fill="#fff"/><circle cx="70.0" cy="36.7" r="0.32" fill="#fff"/><circle cx="75.5" cy="33.3" r="0.40" fill="#fff"/><circle cx="76.2" cy="30.2" r="0.59" fill="#fff"/><circle cx="63.4" cy="28.5" r="0.35" fill="#fff"/><circle cx="74.6" cy="24.5" r="0.32" fill="#fff"/><circle cx="74.0" cy="33.4" r="0.55" fill="#fff"/><circle cx="69.5" cy="32.2" r="0.50" fill="#fff"/><circle cx="74.0" cy="34.2" r="0.73" fill="#fff"/><circle cx="73.6" cy="34.3" r="0.67" fill="#fff"/><circle cx="73.7" cy="35.7" r="0.77" fill="#fff"/><circle cx="66.0" cy="32.8" r="0.72" fill="#fff"/><circle cx="65.0" cy="28.7" r="0.77" fill="#fff"/><circle cx="70.8" cy="24.9" r="0.42" fill="#fff"/><circle cx="67.3" cy="34.0" r="0.79" fill="#fff"/><circle cx="72.6" cy="22.3" r="0.71" fill="#fff"/><circle cx="71.1" cy="28.0" r="0.56" fill="#fff"/><circle cx="77.5" cy="27.5" r="0.42" fill="#fff"/><circle cx="64.4" cy="32.5" r="0.48" fill="#fff"/><circle cx="67.9" cy="29.1" r="0.52" fill="#fff"/><circle cx="68.8" cy="29.5" r="0.37" fill="#fff"/><circle cx="76.9" cy="28.2" r="0.77" fill="#fff"/><circle cx="65.2" cy="24.2" r="0.74" fill="#fff"/><circle cx="71.1" cy="28.5" r="0.62" fill="#fff"/><circle cx="69.3" cy="36.1" r="0.44" fill="#fff"/><circle cx="62.6" cy="27.5" r="0.61" fill="#fff"/><circle cx="70.0" cy="35.3" r="0.52" fill="#fff"/><circle cx="74.1" cy="28.2" r="0.45" fill="#fff"/><circle cx="68.3" cy="27.3" r="0.60" fill="#fff"/><circle cx="75.5" cy="27.9" r="0.43" fill="#fff"/><circle cx="64.3" cy="30.7" r="0.37" fill="#fff"/><circle cx="72.1" cy="31.5" r="0.45" fill="#fff"/><circle cx="66.4" cy="31.9" r="0.42" fill="#fff"/><defs><radialGradient id="g5" cx=".65" cy=".35" r=".7"><stop offset="0" stop-color="#bbb"/><stop offset=".5" stop-color="#444"/><stop offset="1" stop-color="#111"/></radialGradient></defs><circle cx="90.0" cy="29.5" r="8" fill="url(#g5)"/><circle cx="94.8" cy="30.8" r="0.45" fill="#fff" opacity="0.80"/><circle cx="87.5" cy="25.6" r="0.40" fill="#fff" opacity="0.80"/><circle cx="92.5" cy="33.3" r="0.34" fill="#fff" opacity="0.80"/><circle cx="86.5" cy="27.1" r="0.34" fill="#fff" opacity="0.80"/><circle cx="89.9" cy="31.2" r="0.27" fill="#fff" opacity="0.80"/><circle cx="87.3" cy="28.2" r="0.38" fill="#fff" opacity="0.80"/><circle cx="94.6" cy="28.8" r="0.46" fill="#fff" opacity="0.80"/><circle cx="91.3" cy="33.0" r="0.35" fill="#fff" opacity="0.80"/><circle cx="89.7" cy="34.3" r="0.29" fill="#fff" opacity="0.80"/><circle cx="91.3" cy="26.1" r="0.22" fill="#fff" opacity="0.80"/><circle cx="93.7" cy="25.6" r="0.22" fill="#fff" opacity="0.80"/><circle cx="88.0" cy="31.1" r="0.42" fill="#fff" opacity="0.80"/><circle cx="93.2" cy="30.3" r="0.49" fill="#fff" opacity="0.80"/><circle cx="90.8" cy="26.1" r="0.30" fill="#fff" opacity="0.80"/><circle cx="88.0" cy="32.4" r="0.38" fill="#fff" opacity="0.80"/><circle cx="94.2" cy="24.1" r="0.36" fill="#fff" opacity="0.80"/><circle cx="90.6" cy="23.3" r="0.43" fill="#fff" opacity="0.80"/><circle cx="85.7" cy="29.3" r="0.41" fill="#fff" opacity="0.80"/><circle cx="92.8" cy="27.4" r="0.46" fill="#fff" opacity="0.80"/><circle cx="96.2" cy="28.6" r="0.38" fill="#fff" opacity="0.80"/><ellipse cx="9.0" cy="49.5" rx="8.0" ry="4.5" fill="#222"/><circle cx="1.2" cy="49.6" r="0.53" fill="#fff"/><circle cx="2.8" cy="51.5" r="0.65" fill="#fff"/><circle cx="5.1" cy="47.8" r="0.48" fill="#fff"/><circle cx="2.4" cy="50.5" r="0.42" fill="#fff"/><circle cx="4.4" cy="51.6" r="0.45" fill="#fff"/><circle cx="5.9" cy="53.1" r="0.64" fill="#fff"/><circle cx="3.7" cy="49.5" r="0.37" fill="#fff"/><circle cx="8.0" cy="51.1" r="0.53" fill="#fff"/><circle cx="6.9" cy="48.8" r="0.67" fill="#fff"/><circle cx="5.7" cy="53.2" r="0.64" fill="#fff"/><circle cx="12.5" cy="49.0" r="0.47" fill="#fff"/><circle cx="9.7" cy="49.3" r="0.32" fill="#fff"/><circle cx="3.8" cy="48.2" r="0.67" fill="#fff"/><circle cx="9.9" cy="46.2" r="0.70" fill="#fff"/><circle cx="3.3" cy="49.1" r="0.57" fill="#fff"/><circle cx="5.3" cy="51.2" r="0.54" fill="#fff"/><circle cx="4.4" cy="53.0" r="0.57" fill="#fff"/><circle cx="6.5" cy="49.3" r="0.45" fill="#fff"/><circle cx="4.1" cy="51.5" r="0.53" fill="#fff"/><circle cx="14.7" cy="46.5" r="0.49" fill="#fff"/><circle cx="3.1" cy="50.8" r="0.70" fill="#fff"/><circle cx="5.8" cy="52.2" r="0.63" fill="#fff"/><circle cx="11.2" cy="51.7" r="0.69" fill="#fff"/><circle cx="11.6" cy="46.6" r="0.34" fill="#fff"/><circle cx="14.2" cy="47.2" r="0.63" fill="#fff"/><circle cx="16.5" cy="49.2" r="0.47" fill="#fff"/><circle cx="11.4" cy="51.5" r="0.50" fill="#fff"/><circle cx="5.5" cy="49.4" r="0.37" fill="#fff"/><circle cx="4.7" cy="47.0" r="0.44" fill="#fff"/><circle cx="15.4" cy="49.4" r="0.32" fill="#fff"/><circle cx="3.0" cy="51.6" r="0.42" fill="#fff"/><circle cx="8.8" cy="49.2" r="0.42" fill="#fff"/><circle cx="12.4" cy="46.6" r="0.57" fill="#fff"/><circle cx="10.9" cy="52.5" r="0.52" fill="#fff"/><circle cx="8.4" cy="53.1" r="0.51" fill="#fff"/><circle cx="15.1" cy="49.4" r="0.46" fill="#fff"/><circle cx="11.3" cy="50.7" r="0.60" fill="#fff"/><circle cx="11.0" cy="50.4" r="0.37" fill="#fff"/><circle cx="1.8" cy="48.9" r="0.55" fill="#fff"/><circle cx="9.7" cy="48.4" r="0.30" fill="#fff"/><circle cx="9.6" cy="47.0" r="0.59" fill="#fff"/><circle cx="7.0" cy="51.0" r="0.41" fill="#fff"/><circle cx="15.2" cy="52.0" r="0.53" fill="#fff"/><circle cx="5.9" cy="52.0" r="0.45" fill="#fff"/><circle cx="16.1" cy="50.9" r="0.53" fill="#fff"/><circle cx="14.1" cy="48.8" r="0.55" fill="#fff"/><circle cx="9.0" cy="50.4" r="0.67" fill="#fff"/><circle cx="11.7" cy="47.5" r="0.66" fill="#fff"/><circle cx="10.8" cy="47.2" r="0.54" fill="#fff"/><circle cx="14.5" cy="48.7" r="0.68" fill="#fff"/><circle cx="9.2" cy="52.3" r="0.59" fill="#fff"/><circle cx="9.8" cy="52.0" r="0.65" fill="#fff"/><circle cx="1.9" cy="49.9" r="0.40" fill="#fff"/><circle cx="11.2" cy="51.9" r="0.37" fill="#fff"/><circle cx="13.2" cy="49.1" r="0.52" fill="#fff"/><circle cx="13.4" cy="51.7" r="0.45" fill="#fff"/><circle cx="7.3" cy="50.2" r="0.35" fill="#fff"/><circle cx="11.2" cy="47.1" r="0.40" fill="#fff"/><circle cx="10.5" cy="51.7" r="0.39" fill="#fff"/><circle cx="15.4" cy="50.3" r="0.44" fill="#fff"/><circle cx="12.7" cy="52.6" r="0.34" fill="#fff"/><circle cx="8.1" cy="53.6" r="0.35" fill="#fff"/><circle cx="2.1" cy="50.9" r="0.62" fill="#fff"/><circle cx="11.6" cy="51.8" r="0.59" fill="#fff"/><circle cx="3.4" cy="52.6" r="0.38" fill="#fff"/><circle cx="14.4" cy="48.5" r="0.39" fill="#fff"/><circle cx="6.2" cy="50.0" r="0.58" fill="#fff"/><circle cx="8.5" cy="53.8" r="0.54" fill="#fff"/><circle cx="6.3" cy="51.1" r="0.54" fill="#fff"/><circle cx="10.7" cy="53.6" r="0.35" fill="#fff"/><ellipse cx="29.0" cy="49.5" rx="7.0" ry="4.5" fill="#555"/><circle cx="23.9" cy="49.2" r="0.38" fill="#fff"/><circle cx="29.6" cy="46.7" r="0.50" fill="#fff"/><circle cx="25.4" cy="48.5" r="0.42" fill="#fff"/><circle cx="31.5" cy="50.5" r="0.56" fill="#fff"/><circle cx="26.5" cy="52.8" r="0.33" fill="#fff"/><circle cx="25.1" cy="48.5" r="0.45" fill="#fff"/><circle cx="28.5" cy="50.6" r="0.39" fill="#fff"/><circle cx="29.4" cy="51.1" r="0.52" fill="#fff"/><circle cx="28.1" cy="52.3" r="0.57" fill="#fff"/><circle cx="30.0" cy="45.3" r="0.56" fill="#fff"/><circle cx="31.5" cy="51.2" r="0.31" fill="#fff"/><circle cx="26.6" cy="46.2" r="0.41" fill="#fff"/><circle cx="24.2" cy="51.4" r="0.51" fill="#fff"/><circle cx="29.1" cy="53.6" r="0.41" fill="#fff"/><circle cx="26.9" cy="48.1" r="0.33" fill="#fff"/><circle cx="34.1" cy="47.5" r="0.51" fill="#fff"/><circle cx="30.4" cy="49.7" r="0.35" fill="#fff"/><circle cx="30.2" cy="51.8" r="0.41" fill="#fff"/><circle cx="32.8" cy="50.1" r="0.49" fill="#fff"/><circle cx="31.7" cy="53.2" r="0.47" fill="#fff"/><circle cx="28.3" cy="47.3" r="0.43" fill="#fff"/><circle cx="27.3" cy="47.1" r="0.30" fill="#fff"/><circle cx="32.1" cy="46.1" r="0.39" fill="#fff"/><circle cx="35.2" cy="50.6" r="0.48" fill="#fff"/><circle cx="32.3" cy="50.2" r="0.33" fill="#fff"/><circle cx="29.8" cy="47.5" r="0.57" fill="#fff"/><circle cx="29.0" cy="48.2" r="0.51" fill="#fff"/><circle cx="24.2" cy="51.9" r="0.55" fill="#fff"/><circle cx="28.6" cy="50.8" r="0.58" fill="#fff"/><circle cx="23.0" cy="51.5" r="0.51" fill="#fff"/><circle cx="28.5" cy="45.4" r="0.49" fill="#fff"/><circle cx="27.4" cy="49.8" r="0.51" fill="#fff"/><circle cx="24.5" cy="50.9" r="0.58" fill="#fff"/><circle cx="33.2" cy="52.3" r="0.31" fill="#fff"/><circle cx="27.2" cy="45.6" r="0.38" fill="#fff"/><circle cx="22.4" cy="48.2" r="0.49" fill="#fff"/><circle cx="25.6" cy="48.9" r="0.32" fill="#fff"/><circle cx="26.2" cy="51.7" r="0.36" fill="#fff"/><circle cx="28.0" cy="51.0" r="0.51" fill="#fff"/><circle cx="27.4" cy="47.6" r="0.37" fill="#fff"/><circle cx="24.4" cy="49.2" r="0.58" fill="#fff"/><circle cx="26.7" cy="51.5" r="0.57" fill="#fff"/><circle cx="32.3" cy="52.1" r="0.40" fill="#fff"/><circle cx="31.1" cy="46.4" r="0.53" fill="#fff"/><circle cx="31.8" cy="52.7" r="0.48" fill="#fff"/><circle cx="23.1" cy="50.5" r="0.55" fill="#fff"/><circle cx="31.8" cy="51.1" r="0.41" fill="#fff"/><circle cx="29.5" cy="50.6" r="0.38" fill="#fff"/><circle cx="30.9" cy="53.1" r="0.43" fill="#fff"/><circle cx="32.0" cy="51.2" r="0.44" fill="#fff"/><circle cx="27.1" cy="50.9" r="0.32" fill="#fff"/><circle cx="36.0" cy="49.8" r="0.53" fill="#fff"/><circle cx="34.1" cy="51.4" r="0.59" fill="#fff"/><circle cx="26.9" cy="48.9" r="0.45" fill="#fff"/><circle cx="26.2" cy="50.3" r="0.46" fill="#fff"/><circle cx="35.7" cy="49.7" r="0.49" fill="#fff"/><circle cx="24.3" cy="46.4" r="0.50" fill="#fff"/><circle cx="29.0" cy="51.7" r="0.34" fill="#fff"/><circle cx="35.1" cy="50.2" r="0.55" fill="#fff"/><circle cx="28.1" cy="51.4" r="0.49" fill="#fff"/><circle cx="50.6" cy="42.0" r="0.37" fill="#000" opacity="0.50"/><circle cx="49.5" cy="42.1" r="0.60" fill="#000" opacity="0.50"/><circle cx="48.6" cy="51.8" r="0.63" fill="#000" opacity="0.50"/><circle cx="48.5" cy="53.0" r="0.52" fill="#000" opacity="0.50"/><circle cx="47.5" cy="55.0" r="0.40" fill="#000" opacity="0.50"/><circle cx="50.5" cy="50.8" r="0.55" fill="#000" opacity="0.50"/><circle cx="49.8" cy="43.8" r="0.66" fill="#000" opacity="0.50"/><circle cx="50.3" cy="47.9" r="0.50" fill="#000" opacity="0.50"/><circle cx="49.6" cy="52.3" r="0.53" fill="#000" opacity="0.50"/><circle cx="50.6" cy="52.4" r="0.37" fill="#000" opacity="0.50"/><circle cx="46.0" cy="53.2" r="0.34" fill="#000" opacity="0.50"/><circle cx="50.3" cy="50.6" r="0.38" fill="#000" opacity="0.50"/><circle cx="49.0" cy="49.2" r="0.64" fill="#000" opacity="0.50"/><circle cx="50.3" cy="44.0" r="0.47" fill="#000" opacity="0.50"/><path d="M64.3 50.1q3 -2 6 0" fill="none" stroke="#888" stroke-width=".7"/><path d="M66.1 47.7q3 -2 6 0" fill="none" stroke="#888" stroke-width=".7"/><path d="M64.7 47.9q3 -2 6 0" fill="none" stroke="#888" stroke-width=".7"/><path d="M67.3 51.8q3 -2 6 0" fill="none" stroke="#888" stroke-width=".7"/><path d="M69.2 45.1q3 -2 6 0" fill="none" stroke="#888" stroke-width=".7"/><path d="M64.4 47.9q3 -2 6 0" fill="none" stroke="#888" stroke-width=".7"/><path d="M66.5 47.0q3 -2 6 0" fill="none" stroke="#888" stroke-width=".7"/><path d="M83.6 44.4q3 -2 6 0" fill="none" stroke="#999" stroke-width=".7"/><path d="M84.6 48.1q3 -2 6 0" fill="none" stroke="#999" stroke-width=".7"/><path d="M89.8 52.6q3 -2 6 0" fill="none" stroke="#999" stroke-width=".7"/><path d="M88.9 53.2q3 -2 6 0" fill="none" stroke="#999" stroke-width=".7"/><path d="M89.7 49.7q3 -2 6 0" fill="none" stroke="#999" stroke-width=".7"/><path d="M88.5 44.1q3 -2 6 0" fill="none" stroke="#999" stroke-width=".7"/><path d="M87.4 49.6q3 -2 6 0" fill="none" stroke="#999" stroke-width=".7"/><circle cx="9.0" cy="68.5" r="7.5" fill="#999" opacity=".35"/><circle cx="7.7" cy="72.9" r="0.58" fill="#000" opacity="0.45"/><circle cx="4.0" cy="69.1" r="0.32" fill="#000" opacity="0.45"/><circle cx="5.0" cy="74.6" r="0.21" fill="#000" opacity="0.45"/><circle cx="11.0" cy="73.4" r="0.38" fill="#000" opacity="0.45"/><circle cx="13.4" cy="71.1" r="0.35" fill="#000" opacity="0.45"/><circle cx="5.8" cy="66.7" r="0.41" fill="#000" opacity="0.45"/><circle cx="5.8" cy="67.1" r="0.25" fill="#000" opacity="0.45"/><circle cx="12.1" cy="75.2" r="0.42" fill="#000" opacity="0.45"/><circle cx="14.3" cy="73.0" r="0.30" fill="#000" opacity="0.45"/><circle cx="12.6" cy="70.9" r="0.30" fill="#000" opacity="0.45"/><circle cx="4.6" cy="68.8" r="0.29" fill="#000" opacity="0.45"/><circle cx="7.5" cy="67.7" r="0.41" fill="#000" opacity="0.45"/><circle cx="7.8" cy="67.7" r="0.36" fill="#000" opacity="0.45"/><circle cx="12.4" cy="70.2" r="0.55" fill="#000" opacity="0.45"/><circle cx="3.7" cy="66.8" r="0.50" fill="#000" opacity="0.45"/><circle cx="17.0" cy="75.6" r="0.49" fill="#000" opacity="0.45"/><circle cx="14.3" cy="72.4" r="0.36" fill="#000" opacity="0.45"/><circle cx="13.2" cy="76.3" r="0.43" fill="#000" opacity="0.45"/><circle cx="9.3" cy="66.6" r="0.51" fill="#000" opacity="0.45"/><circle cx="11.4" cy="69.4" r="0.35" fill="#000" opacity="0.45"/><circle cx="13.7" cy="68.9" r="0.29" fill="#000" opacity="0.45"/><circle cx="7.3" cy="73.7" r="0.37" fill="#000" opacity="0.45"/><circle cx="12.7" cy="65.4" r="0.55" fill="#000" opacity="0.45"/><circle cx="1.8" cy="65.5" r="0.55" fill="#000" opacity="0.45"/><circle cx="11.9" cy="73.5" r="0.34" fill="#000" opacity="0.45"/><circle cx="9.5" cy="63.2" r="0.53" fill="#000" opacity="0.45"/><circle cx="11.4" cy="70.9" r="0.49" fill="#000" opacity="0.45"/><circle cx="14.3" cy="66.7" r="0.22" fill="#000" opacity="0.45"/><circle cx="7.7" cy="67.5" r="0.42" fill="#000" opacity="0.45"/><circle cx="9.6" cy="66.9" r="0.57" fill="#000" opacity="0.45"/><circle cx="7.8" cy="66.1" r="0.28" fill="#000" opacity="0.45"/><circle cx="2.7" cy="70.7" r="0.43" fill="#000" opacity="0.45"/><circle cx="9.5" cy="69.0" r="0.24" fill="#000" opacity="0.45"/><circle cx="9.7" cy="66.4" r="0.42" fill="#000" opacity="0.45"/><circle cx="7.7" cy="73.7" r="0.35" fill="#000" opacity="0.45"/><circle cx="13.4" cy="74.1" r="0.42" fill="#000" opacity="0.45"/><circle cx="6.6" cy="62.6" r="0.58" fill="#000" opacity="0.45"/><circle cx="12.2" cy="68.8" r="0.26" fill="#000" opacity="0.45"/><circle cx="1.9" cy="68.4" r="0.52" fill="#000" opacity="0.45"/><circle cx="11.2" cy="69.0" r="0.53" fill="#000" opacity="0.45"/><circle cx="7.5" cy="65.3" r="0.39" fill="#000" opacity="0.45"/><circle cx="12.7" cy="74.2" r="0.36" fill="#000" opacity="0.45"/><circle cx="12.4" cy="65.1" r="0.23" fill="#000" opacity="0.45"/><circle cx="7.8" cy="70.6" r="0.56" fill="#000" opacity="0.45"/><circle cx="8.1" cy="67.9" r="0.27" fill="#000" opacity="0.45"/><circle cx="6.5" cy="71.5" r="0.43" fill="#000" opacity="0.45"/><circle cx="6.5" cy="70.6" r="0.20" fill="#000" opacity="0.45"/><circle cx="6.2" cy="67.0" r="0.21" fill="#000" opacity="0.45"/><circle cx="-0.9" cy="71.1" r="0.22" fill="#000" opacity="0.45"/><circle cx="12.2" cy="72.6" r="0.31" fill="#000" opacity="0.45"/><circle cx="8.4" cy="72.6" r="0.30" fill="#000" opacity="0.45"/><circle cx="5.1" cy="66.7" r="0.58" fill="#000" opacity="0.45"/><circle cx="9.9" cy="68.5" r="0.42" fill="#000" opacity="0.45"/><circle cx="9.9" cy="61.5" r="0.51" fill="#000" opacity="0.45"/><circle cx="5.7" cy="64.8" r="0.35" fill="#000" opacity="0.45"/><circle cx="7.8" cy="74.6" r="0.55" fill="#000" opacity="0.45"/><circle cx="13.9" cy="66.5" r="0.32" fill="#000" opacity="0.45"/><circle cx="9.5" cy="62.8" r="0.40" fill="#000" opacity="0.45"/><circle cx="6.9" cy="66.1" r="0.42" fill="#000" opacity="0.45"/><circle cx="8.0" cy="69.2" r="0.33" fill="#000" opacity="0.45"/><circle cx="4.4" cy="77.9" r="0.39" fill="#000" opacity="0.45"/><circle cx="7.2" cy="70.4" r="0.29" fill="#000" opacity="0.45"/><circle cx="7.9" cy="70.0" r="0.20" fill="#000" opacity="0.45"/><circle cx="11.6" cy="65.7" r="0.38" fill="#000" opacity="0.45"/><circle cx="6.3" cy="67.3" r="0.27" fill="#000" opacity="0.45"/><circle cx="11.7" cy="69.7" r="0.32" fill="#000" opacity="0.45"/><circle cx="8.4" cy="64.1" r="0.57" fill="#000" opacity="0.45"/><circle cx="4.8" cy="75.1" r="0.43" fill="#000" opacity="0.45"/><circle cx="10.9" cy="69.6" r="0.43" fill="#000" opacity="0.45"/><circle cx="12.3" cy="68.2" r="0.51" fill="#000" opacity="0.45"/><circle cx="2.7" cy="71.6" r="0.23" fill="#000" opacity="0.45"/><circle cx="1.5" cy="69.2" r="0.31" fill="#000" opacity="0.45"/><circle cx="9.0" cy="69.3" r="0.27" fill="#000" opacity="0.45"/><circle cx="8.4" cy="73.9" r="0.29" fill="#000" opacity="0.45"/><circle cx="7.1" cy="69.9" r="0.44" fill="#000" opacity="0.45"/><circle cx="12.3" cy="64.7" r="0.28" fill="#000" opacity="0.45"/><circle cx="8.1" cy="59.6" r="0.44" fill="#000" opacity="0.45"/><circle cx="14.6" cy="71.5" r="0.55" fill="#000" opacity="0.45"/><circle cx="8.0" cy="70.1" r="0.28" fill="#000" opacity="0.45"/><circle cx="2.0" cy="66.9" r="0.46" fill="#000" opacity="0.45"/><circle cx="11.1" cy="67.4" r="0.33" fill="#000" opacity="0.45"/><circle cx="9.0" cy="63.4" r="0.36" fill="#000" opacity="0.45"/><circle cx="7.6" cy="65.6" r="0.22" fill="#000" opacity="0.45"/><circle cx="8.1" cy="69.0" r="0.45" fill="#000" opacity="0.45"/><circle cx="6.9" cy="72.0" r="0.44" fill="#000" opacity="0.45"/><circle cx="8.8" cy="72.4" r="0.21" fill="#000" opacity="0.45"/><circle cx="13.0" cy="66.5" r="0.60" fill="#000" opacity="0.45"/><circle cx="13.5" cy="70.2" r="0.49" fill="#000" opacity="0.45"/><circle cx="8.3" cy="69.9" r="0.26" fill="#000" opacity="0.45"/><circle cx="12.7" cy="73.2" r="0.24" fill="#000" opacity="0.45"/><circle cx="10.4" cy="65.1" r="0.42" fill="#000" opacity="0.45"/><circle cx="5.2" cy="66.1" r="0.46" fill="#000" opacity="0.45"/><circle cx="6.5" cy="66.6" r="0.50" fill="#000" opacity="0.45"/><circle cx="8.7" cy="74.0" r="0.51" fill="#000" opacity="0.45"/><circle cx="9.5" cy="65.5" r="0.51" fill="#000" opacity="0.45"/><circle cx="12.8" cy="68.0" r="0.31" fill="#000" opacity="0.45"/><circle cx="0.8" cy="67.3" r="0.25" fill="#000" opacity="0.45"/><circle cx="13.0" cy="68.7" r="0.46" fill="#000" opacity="0.45"/><circle cx="9.5" cy="65.2" r="0.60" fill="#000" opacity="0.45"/><circle cx="9.8" cy="74.3" r="0.24" fill="#000" opacity="0.45"/><circle cx="10.8" cy="68.8" r="0.22" fill="#000" opacity="0.45"/><circle cx="4.5" cy="68.4" r="0.27" fill="#000" opacity="0.45"/><circle cx="12.1" cy="67.3" r="0.26" fill="#000" opacity="0.45"/><circle cx="11.5" cy="73.6" r="0.57" fill="#000" opacity="0.45"/><circle cx="9.4" cy="69.2" r="0.51" fill="#000" opacity="0.45"/><circle cx="9.5" cy="78.4" r="0.40" fill="#000" opacity="0.45"/><circle cx="6.9" cy="66.1" r="0.52" fill="#000" opacity="0.45"/><circle cx="6.0" cy="69.3" r="0.56" fill="#000" opacity="0.45"/><circle cx="13.4" cy="72.1" r="0.23" fill="#000" opacity="0.45"/><circle cx="6.8" cy="65.7" r="0.55" fill="#000" opacity="0.45"/><circle cx="13.2" cy="70.2" r="0.36" fill="#000" opacity="0.45"/><circle cx="16.4" cy="64.4" r="0.45" fill="#000" opacity="0.45"/><circle cx="9.4" cy="71.1" r="0.30" fill="#000" opacity="0.45"/><circle cx="6.7" cy="69.5" r="0.28" fill="#000" opacity="0.45"/><circle cx="9.3" cy="63.5" r="0.32" fill="#000" opacity="0.45"/><circle cx="11.4" cy="68.4" r="0.43" fill="#000" opacity="0.45"/><circle cx="12.9" cy="74.3" r="0.55" fill="#000" opacity="0.45"/><circle cx="8.4" cy="74.3" r="0.53" fill="#000" opacity="0.45"/><circle cx="8.4" cy="71.6" r="0.39" fill="#000" opacity="0.45"/><circle cx="10.6" cy="67.2" r="0.47" fill="#000" opacity="0.45"/><circle cx="26.3" cy="66.6" r="0.96" fill="#000" opacity="0.55"/><circle cx="30.5" cy="67.1" r="1.21" fill="#000" opacity="0.55"/><circle cx="25.7" cy="72.5" r="1.19" fill="#000" opacity="0.55"/><circle cx="31.5" cy="74.0" r="1.30" fill="#000" opacity="0.55"/><circle cx="28.8" cy="69.1" r="0.59" fill="#000" opacity="0.55"/><circle cx="29.4" cy="68.4" r="1.23" fill="#000" opacity="0.55"/><circle cx="31.9" cy="72.5" r="0.58" fill="#000" opacity="0.55"/><circle cx="31.2" cy="72.5" r="0.57" fill="#000" opacity="0.55"/><circle cx="25.4" cy="74.2" r="1.07" fill="#000" opacity="0.55"/><circle cx="35.2" cy="62.8" r="0.53" fill="#000" opacity="0.55"/><circle cx="29.5" cy="73.8" r="1.05" fill="#000" opacity="0.55"/><circle cx="32.5" cy="69.3" r="0.69" fill="#000" opacity="0.55"/><circle cx="27.7" cy="69.1" r="0.52" fill="#000" opacity="0.55"/><circle cx="31.6" cy="68.3" r="1.20" fill="#000" opacity="0.55"/><circle cx="31.5" cy="70.9" r="0.61" fill="#000" opacity="0.55"/><circle cx="27.3" cy="69.3" r="1.05" fill="#000" opacity="0.55"/><circle cx="31.9" cy="72.4" r="0.90" fill="#000" opacity="0.55"/><circle cx="31.1" cy="70.3" r="0.90" fill="#000" opacity="0.55"/><circle cx="31.4" cy="67.1" r="0.67" fill="#000" opacity="0.55"/><circle cx="35.1" cy="67.2" r="1.09" fill="#000" opacity="0.55"/><circle cx="28.7" cy="70.4" r="0.71" fill="#000" opacity="0.55"/><circle cx="29.8" cy="68.9" r="0.91" fill="#000" opacity="0.55"/><circle cx="25.8" cy="70.6" r="0.79" fill="#000" opacity="0.55"/><circle cx="33.6" cy="68.8" r="1.02" fill="#000" opacity="0.55"/><circle cx="25.4" cy="67.5" r="1.05" fill="#000" opacity="0.55"/><circle cx="35.1" cy="67.8" r="1.07" fill="#000" opacity="0.55"/><circle cx="26.9" cy="70.1" r="0.84" fill="#000" opacity="0.55"/><circle cx="31.9" cy="68.0" r="0.81" fill="#000" opacity="0.55"/><circle cx="27.6" cy="69.4" r="1.30" fill="#000" opacity="0.55"/><circle cx="33.1" cy="68.6" r="1.24" fill="#000" opacity="0.55"/><circle cx="28.9" cy="72.6" r="0.80" fill="#000" opacity="0.55"/><circle cx="29.1" cy="70.5" r="0.59" fill="#000" opacity="0.55"/><circle cx="31.9" cy="64.1" r="1.23" fill="#000" opacity="0.55"/><circle cx="33.4" cy="69.9" r="0.76" fill="#000" opacity="0.55"/><circle cx="26.7" cy="65.5" r="0.75" fill="#000" opacity="0.55"/><circle cx="29.1" cy="68.5" r="1.10" fill="#000" opacity="0.55"/><circle cx="31.2" cy="65.6" r="0.97" fill="#000" opacity="0.55"/><circle cx="31.2" cy="68.4" r="1.00" fill="#000" opacity="0.55"/><circle cx="28.9" cy="65.6" r="1.07" fill="#000" opacity="0.55"/><circle cx="26.1" cy="70.8" r="0.99" fill="#000" opacity="0.55"/><circle cx="27.8" cy="66.1" r="1.00" fill="#000" opacity="0.55"/><circle cx="26.9" cy="67.9" r="0.99" fill="#000" opacity="0.55"/><circle cx="28.4" cy="75.0" r="0.88" fill="#000" opacity="0.55"/><circle cx="28.4" cy="64.9" r="0.88" fill="#000" opacity="0.55"/><circle cx="29.3" cy="70.1" r="1.24" fill="#000" opacity="0.55"/><circle cx="25.4" cy="67.8" r="0.92" fill="#000" opacity="0.55"/><circle cx="29.9" cy="66.5" r="0.64" fill="#000" opacity="0.55"/><circle cx="30.5" cy="65.5" r="1.01" fill="#000" opacity="0.55"/><circle cx="32.0" cy="62.9" r="1.19" fill="#000" opacity="0.55"/><circle cx="31.8" cy="69.3" r="1.17" fill="#000" opacity="0.55"/><ellipse cx="29.0" cy="68.5" rx="3.0" ry="3.0" fill="#222"/><circle cx="29.4" cy="67.5" r="0.35" fill="#fff"/><circle cx="29.0" cy="69.5" r="0.41" fill="#fff"/><circle cx="29.7" cy="66.5" r="0.44" fill="#fff"/><circle cx="30.6" cy="69.5" r="0.60" fill="#fff"/><path d="M42.4 62.5h13.8" stroke="#111" stroke-width=".8"/><path d="M42.0 64.8h15.2" stroke="#111" stroke-width=".8"/><path d="M42.5 67.1h12.6" stroke="#111" stroke-width=".8"/><path d="M42.4 69.4h13.5" stroke="#111" stroke-width=".8"/><path d="M42.0 71.7h13.0" stroke="#111" stroke-width=".8"/><path d="M41.7 74.0h13.4" stroke="#111" stroke-width=".8"/><ellipse cx="69.0" cy="68.5" rx="6.5" ry="6.5" fill="#222"/><circle cx="68.4" cy="69.1" r="0.44" fill="#fff"/><circle cx="67.6" cy="67.8" r="0.42" fill="#fff"/><circle cx="68.3" cy="65.2" r="0.53" fill="#fff"/><circle cx="69.3" cy="74.4" r="0.36" fill="#fff"/><circle cx="65.0" cy="64.0" r="0.44" fill="#fff"/><circle cx="63.9" cy="71.2" r="0.73" fill="#fff"/><circle cx="68.1" cy="69.5" r="0.61" fill="#fff"/><circle cx="65.3" cy="72.6" r="0.51" fill="#fff"/><circle cx="64.6" cy="71.4" r="0.87" fill="#fff"/><circle cx="66.6" cy="71.7" r="0.71" fill="#fff"/><circle cx="71.5" cy="67.2" r="0.98" fill="#fff"/><circle cx="68.1" cy="64.6" r="0.77" fill="#fff"/><circle cx="68.2" cy="70.0" r="0.83" fill="#fff"/><circle cx="65.6" cy="71.7" r="0.65" fill="#fff"/><circle cx="73.6" cy="65.2" r="0.32" fill="#fff"/><circle cx="65.3" cy="66.1" r="0.62" fill="#fff"/><circle cx="71.2" cy="65.0" r="0.63" fill="#fff"/><circle cx="72.3" cy="65.8" r="0.64" fill="#fff"/><circle cx="63.1" cy="68.1" r="0.77" fill="#fff"/><circle cx="68.8" cy="64.4" r="0.33" fill="#fff"/><circle cx="66.9" cy="64.1" r="0.84" fill="#fff"/><circle cx="69.3" cy="66.3" r="0.45" fill="#fff"/><circle cx="74.2" cy="71.2" r="0.37" fill="#fff"/><circle cx="73.8" cy="71.5" r="0.70" fill="#fff"/><circle cx="74.0" cy="70.3" r="0.80" fill="#fff"/><circle cx="67.5" cy="68.7" r="0.78" fill="#fff"/><circle cx="64.7" cy="70.9" r="1.00" fill="#fff"/><circle cx="71.5" cy="63.0" r="0.40" fill="#fff"/><circle cx="66.6" cy="72.5" r="0.30" fill="#fff"/><circle cx="72.4" cy="68.3" r="0.48" fill="#fff"/><circle cx="68.1" cy="70.6" r="0.73" fill="#000" opacity="0.50"/><circle cx="65.6" cy="67.3" r="0.51" fill="#000" opacity="0.50"/><circle cx="71.4" cy="69.3" r="0.73" fill="#000" opacity="0.50"/><circle cx="70.9" cy="62.9" r="0.43" fill="#000" opacity="0.50"/><circle cx="69.3" cy="69.4" r="0.57" fill="#000" opacity="0.50"/><circle cx="66.6" cy="70.9" r="0.54" fill="#000" opacity="0.50"/><circle cx="66.5" cy="67.1" r="0.70" fill="#000" opacity="0.50"/><circle cx="71.1" cy="74.9" r="0.58" fill="#000" opacity="0.50"/><circle cx="71.5" cy="69.3" r="0.57" fill="#000" opacity="0.50"/><circle cx="65.7" cy="70.6" r="0.46" fill="#000" opacity="0.50"/><circle cx="68.2" cy="73.8" r="0.45" fill="#000" opacity="0.50"/><circle cx="67.7" cy="63.3" r="0.60" fill="#000" opacity="0.50"/><circle cx="62.3" cy="70.5" r="0.52" fill="#000" opacity="0.50"/><circle cx="69.7" cy="67.8" r="0.52" fill="#000" opacity="0.50"/><circle cx="68.4" cy="67.8" r="0.73" fill="#000" opacity="0.50"/><circle cx="92.6" cy="69.3" r="0.39" fill="#000" opacity="0.35"/><circle cx="92.4" cy="65.7" r="0.70" fill="#000" opacity="0.35"/><circle cx="84.5" cy="67.6" r="0.64" fill="#000" opacity="0.35"/><circle cx="88.4" cy="69.5" r="0.72" fill="#000" opacity="0.35"/><circle cx="93.1" cy="72.8" r="0.40" fill="#000" opacity="0.35"/><circle cx="90.1" cy="68.3" r="0.69" fill="#000" opacity="0.35"/><circle cx="92.0" cy="66.6" r="0.63" fill="#000" opacity="0.35"/><circle cx="88.7" cy="74.0" r="0.64" fill="#000" opacity="0.35"/><circle cx="89.6" cy="68.3" r="0.65" fill="#000" opacity="0.35"/><circle cx="94.5" cy="69.0" r="0.45" fill="#000" opacity="0.35"/><circle cx="89.4" cy="71.4" r="0.46" fill="#000" opacity="0.35"/><circle cx="87.4" cy="66.9" r="0.76" fill="#000" opacity="0.35"/><circle cx="86.4" cy="72.6" r="0.38" fill="#000" opacity="0.35"/><circle cx="91.6" cy="59.5" r="0.50" fill="#000" opacity="0.35"/><circle cx="91.9" cy="68.1" r="0.62" fill="#000" opacity="0.35"/><circle cx="89.6" cy="71.2" r="0.35" fill="#000" opacity="0.35"/><circle cx="84.3" cy="68.6" r="0.51" fill="#000" opacity="0.35"/><circle cx="88.4" cy="66.2" r="0.71" fill="#000" opacity="0.35"/><circle cx="93.9" cy="72.2" r="0.80" fill="#000" opacity="0.35"/><circle cx="92.4" cy="66.1" r="0.45" fill="#000" opacity="0.35"/><circle cx="86.1" cy="71.6" r="0.55" fill="#000" opacity="0.35"/><circle cx="90.2" cy="66.9" r="0.54" fill="#000" opacity="0.35"/><circle cx="91.7" cy="64.4" r="0.57" fill="#000" opacity="0.35"/><circle cx="90.4" cy="68.4" r="0.44" fill="#000" opacity="0.35"/><circle cx="93.5" cy="63.9" r="0.41" fill="#000" opacity="0.35"/><circle cx="89.7" cy="67.1" r="0.60" fill="#000" opacity="0.35"/><circle cx="91.7" cy="66.9" r="0.77" fill="#000" opacity="0.35"/><circle cx="88.5" cy="66.7" r="0.47" fill="#000" opacity="0.35"/><circle cx="86.9" cy="68.2" r="0.67" fill="#000" opacity="0.35"/><circle cx="91.3" cy="72.3" r="0.45" fill="#000" opacity="0.35"/><circle cx="92.5" cy="69.1" r="0.35" fill="#000" opacity="0.35"/><circle cx="84.0" cy="65.8" r="0.60" fill="#000" opacity="0.35"/><circle cx="88.2" cy="67.7" r="0.56" fill="#000" opacity="0.35"/><circle cx="92.5" cy="70.0" r="0.37" fill="#000" opacity="0.35"/><circle cx="86.5" cy="66.2" r="0.49" fill="#000" opacity="0.35"/><circle cx="88.1" cy="66.0" r="0.38" fill="#000" opacity="0.35"/><circle cx="91.5" cy="66.5" r="0.72" fill="#000" opacity="0.35"/><circle cx="91.4" cy="65.0" r="0.37" fill="#000" opacity="0.35"/><circle cx="94.1" cy="70.9" r="0.36" fill="#000" opacity="0.35"/><circle cx="85.3" cy="67.6" r="0.36" fill="#000" opacity="0.35"/><circle cx="86.4" cy="64.6" r="0.67" fill="#000" opacity="0.70"/><circle cx="86.0" cy="64.5" r="0.50" fill="#000" opacity="0.70"/><circle cx="86.4" cy="64.9" r="0.46" fill="#000" opacity="0.70"/><circle cx="87.1" cy="66.5" r="0.65" fill="#000" opacity="0.70"/><circle cx="87.1" cy="64.4" r="0.87" fill="#000" opacity="0.70"/><circle cx="85.2" cy="64.6" r="0.69" fill="#000" opacity="0.70"/><circle cx="86.7" cy="63.8" r="0.78" fill="#000" opacity="0.70"/><circle cx="87.4" cy="65.1" r="0.42" fill="#000" opacity="0.70"/><circle cx="4.7" cy="91.1" r="0.32" fill="#000" opacity="0.30"/><circle cx="9.1" cy="87.6" r="0.43" fill="#000" opacity="0.30"/><circle cx="8.5" cy="93.2" r="0.51" fill="#000" opacity="0.30"/><circle cx="7.7" cy="87.3" r="0.30" fill="#000" opacity="0.30"/><circle cx="-0.1" cy="82.7" r="0.22" fill="#000" opacity="0.30"/><circle cx="4.0" cy="84.9" r="0.53" fill="#000" opacity="0.30"/><circle cx="4.5" cy="93.8" r="0.38" fill="#000" opacity="0.30"/><circle cx="8.5" cy="88.3" r="0.58" fill="#000" opacity="0.30"/><circle cx="5.0" cy="90.4" r="0.24" fill="#000" opacity="0.30"/><circle cx="8.2" cy="94.2" r="0.47" fill="#000" opacity="0.30"/><circle cx="9.9" cy="91.1" r="0.26" fill="#000" opacity="0.30"/><circle cx="8.8" cy="90.8" r="0.33" fill="#000" opacity="0.30"/><circle cx="19.9" cy="86.7" r="0.52" fill="#000" opacity="0.30"/><circle cx="3.9" cy="89.0" r="0.51" fill="#000" opacity="0.30"/><circle cx="12.9" cy="85.3" r="0.45" fill="#000" opacity="0.30"/><circle cx="9.5" cy="93.2" r="0.54" fill="#000" opacity="0.30"/><circle cx="8.4" cy="87.0" r="0.49" fill="#000" opacity="0.30"/><circle cx="6.8" cy="90.2" r="0.59" fill="#000" opacity="0.30"/><circle cx="5.3" cy="83.4" r="0.25" fill="#000" opacity="0.30"/><circle cx="11.9" cy="81.2" r="0.56" fill="#000" opacity="0.30"/><circle cx="7.8" cy="81.9" r="0.52" fill="#000" opacity="0.30"/><circle cx="4.8" cy="86.5" r="0.53" fill="#000" opacity="0.30"/><circle cx="9.5" cy="81.6" r="0.32" fill="#000" opacity="0.30"/><circle cx="12.2" cy="87.5" r="0.58" fill="#000" opacity="0.30"/><circle cx="14.9" cy="94.6" r="0.51" fill="#000" opacity="0.30"/><circle cx="7.9" cy="95.2" r="0.29" fill="#000" opacity="0.30"/><circle cx="9.2" cy="92.2" r="0.29" fill="#000" opacity="0.30"/><circle cx="0.4" cy="88.9" r="0.47" fill="#000" opacity="0.30"/><circle cx="7.1" cy="85.1" r="0.51" fill="#000" opacity="0.30"/><circle cx="9.4" cy="83.4" r="0.58" fill="#000" opacity="0.30"/><circle cx="29.5" cy="85.3" r="0.34" fill="#000" opacity="0.45"/><circle cx="27.9" cy="83.1" r="0.47" fill="#000" opacity="0.45"/><circle cx="27.4" cy="84.8" r="0.70" fill="#000" opacity="0.45"/><circle cx="30.2" cy="88.6" r="0.31" fill="#000" opacity="0.45"/><circle cx="30.4" cy="92.6" r="0.51" fill="#000" opacity="0.45"/><circle cx="28.1" cy="86.1" r="0.47" fill="#000" opacity="0.45"/><circle cx="29.2" cy="91.7" r="0.72" fill="#000" opacity="0.45"/><circle cx="28.4" cy="86.5" r="0.34" fill="#000" opacity="0.45"/><circle cx="28.8" cy="93.9" r="0.52" fill="#000" opacity="0.45"/><circle cx="28.0" cy="83.1" r="0.36" fill="#000" opacity="0.45"/><circle cx="28.9" cy="87.6" r="0.71" fill="#000" opacity="0.45"/><circle cx="29.3" cy="91.1" r="0.78" fill="#000" opacity="0.45"/><circle cx="28.5" cy="90.4" r="0.74" fill="#000" opacity="0.45"/><circle cx="27.4" cy="83.8" r="0.50" fill="#000" opacity="0.45"/><circle cx="26.5" cy="88.5" r="0.55" fill="#000" opacity="0.45"/><circle cx="29.6" cy="88.3" r="0.72" fill="#000" opacity="0.45"/><circle cx="29.6" cy="92.1" r="0.30" fill="#000" opacity="0.45"/><circle cx="30.1" cy="96.0" r="0.53" fill="#000" opacity="0.45"/><circle cx="29.3" cy="86.0" r="0.48" fill="#000" opacity="0.45"/><circle cx="30.0" cy="91.1" r="0.73" fill="#000" opacity="0.45"/><circle cx="48.2" cy="88.2" r="0.67" fill="#000" opacity="0.80"/><circle cx="49.9" cy="85.3" r="0.33" fill="#000" opacity="0.80"/><circle cx="48.4" cy="85.8" r="0.68" fill="#000" opacity="0.80"/><circle cx="48.2" cy="92.4" r="0.55" fill="#000" opacity="0.80"/><circle cx="48.3" cy="91.5" r="0.57" fill="#000" opacity="0.80"/><circle cx="49.8" cy="86.2" r="0.45" fill="#000" opacity="0.80"/><circle cx="49.3" cy="88.3" r="0.63" fill="#000" opacity="0.80"/><circle cx="48.6" cy="84.4" r="0.48" fill="#000" opacity="0.80"/><circle cx="49.0" cy="81.1" r="0.59" fill="#000" opacity="0.80"/><circle cx="49.0" cy="87.6" r="0.43" fill="#000" opacity="0.80"/><circle cx="70.9" cy="95.1" r="0.93" fill="#000" opacity="0.90"/><circle cx="70.0" cy="92.2" r="0.75" fill="#000" opacity="0.90"/><circle cx="70.1" cy="89.5" r="0.85" fill="#000" opacity="0.90"/><circle cx="68.4" cy="86.3" r="0.86" fill="#000" opacity="0.90"/><circle cx="68.6" cy="92.7" r="0.65" fill="#000" opacity="0.90"/><circle cx="70.7" cy="87.8" r="0.88" fill="#000" opacity="0.90"/><circle cx="68.5" cy="85.4" r="0.98" fill="#000" opacity="0.90"/><circle cx="68.5" cy="83.3" r="0.57" fill="#000" opacity="0.90"/><circle cx="69.8" cy="92.4" r="0.90" fill="#000" opacity="0.90"/><circle cx="69.3" cy="85.4" r="0.48" fill="#000" opacity="0.90"/><circle cx="66.6" cy="87.8" r="0.50" fill="#000" opacity="0.90"/><circle cx="68.9" cy="86.4" r="0.59" fill="#000" opacity="0.90"/><circle cx="70.0" cy="89.5" r="0.63" fill="#000" opacity="0.90"/><circle cx="72.0" cy="86.7" r="0.51" fill="#000" opacity="0.90"/><circle cx="68.0" cy="96.3" r="0.52" fill="#000" opacity="0.90"/><circle cx="68.4" cy="91.9" r="0.47" fill="#000" opacity="0.90"/><circle cx="68.9" cy="92.0" r="0.63" fill="#000" opacity="0.90"/><circle cx="69.9" cy="87.9" r="0.52" fill="#000" opacity="0.90"/><circle cx="70.1" cy="86.4" r="0.90" fill="#000" opacity="0.90"/><circle cx="67.6" cy="83.9" r="0.59" fill="#000" opacity="0.90"/><circle cx="70.2" cy="93.3" r="0.68" fill="#000" opacity="0.90"/><circle cx="67.3" cy="86.6" r="0.85" fill="#000" opacity="0.90"/><circle cx="68.8" cy="91.8" r="0.95" fill="#000" opacity="0.90"/><circle cx="68.0" cy="88.0" r="0.78" fill="#000" opacity="0.90"/><circle cx="68.9" cy="94.5" r="0.42" fill="#000" opacity="0.90"/><circle cx="69.7" cy="84.5" r="0.61" fill="#000" opacity="0.90"/><circle cx="69.9" cy="87.5" r="0.55" fill="#000" opacity="0.90"/><circle cx="70.4" cy="90.4" r="0.85" fill="#000" opacity="0.90"/><circle cx="68.5" cy="85.3" r="0.88" fill="#000" opacity="0.90"/><circle cx="69.8" cy="90.4" r="0.79" fill="#000" opacity="0.90"/><circle cx="70.7" cy="87.5" r="0.82" fill="#000" opacity="0.90"/><circle cx="69.2" cy="85.0" r="0.96" fill="#000" opacity="0.90"/><circle cx="68.9" cy="85.3" r="0.64" fill="#000" opacity="0.90"/><circle cx="69.4" cy="85.4" r="0.51" fill="#000" opacity="0.90"/><circle cx="70.0" cy="85.4" r="0.71" fill="#000" opacity="0.90"/><circle cx="67.7" cy="81.9" r="0.48" fill="#000" opacity="0.90"/><circle cx="68.8" cy="89.6" r="0.65" fill="#000" opacity="0.90"/><circle cx="66.7" cy="88.4" r="0.80" fill="#000" opacity="0.90"/><circle cx="67.9" cy="86.8" r="0.74" fill="#000" opacity="0.90"/><circle cx="68.7" cy="95.2" r="0.87" fill="#000" opacity="0.90"/><ellipse cx="69.0" cy="88.5" rx="1.8" ry="5" fill="#111"/><path d="M80.1 91.1l11 8" stroke="#111" stroke-width=".9"/><path d="M81.8 88.8l11 8" stroke="#111" stroke-width=".9"/><path d="M83.5 86.5l11 8" stroke="#111" stroke-width=".9"/><path d="M85.2 84.2l11 8" stroke="#111" stroke-width=".9"/><path d="M86.9 81.9l11 8" stroke="#111" stroke-width=".9"/><circle cx="10.0" cy="106.8" r="0.50" fill="#000" opacity="0.50"/><circle cx="9.1" cy="105.0" r="0.57" fill="#000" opacity="0.50"/><circle cx="12.5" cy="105.9" r="0.55" fill="#000" opacity="0.50"/><circle cx="6.2" cy="104.7" r="0.34" fill="#000" opacity="0.50"/><circle cx="29.0" cy="108.5" r="6.5" fill="#777" opacity=".6"/><circle cx="27.7" cy="104.0" r="0.61" fill="#000" opacity="0.30"/><circle cx="28.8" cy="109.6" r="0.60" fill="#000" opacity="0.30"/><circle cx="30.1" cy="106.4" r="0.41" fill="#000" opacity="0.30"/><circle cx="29.2" cy="109.8" r="0.64" fill="#000" opacity="0.30"/><circle cx="34.3" cy="107.6" r="0.48" fill="#000" opacity="0.30"/><circle cx="28.6" cy="107.4" r="0.72" fill="#000" opacity="0.30"/><circle cx="28.9" cy="108.7" r="0.61" fill="#000" opacity="0.30"/><circle cx="30.5" cy="110.3" r="0.33" fill="#000" opacity="0.30"/><circle cx="25.4" cy="109.8" r="0.70" fill="#000" opacity="0.30"/><circle cx="34.5" cy="109.9" r="0.36" fill="#000" opacity="0.30"/><circle cx="29.7" cy="112.7" r="0.47" fill="#000" opacity="0.30"/><circle cx="27.1" cy="111.9" r="0.41" fill="#000" opacity="0.30"/><circle cx="29.6" cy="106.5" r="0.72" fill="#000" opacity="0.30"/><circle cx="30.3" cy="105.0" r="0.32" fill="#000" opacity="0.30"/><circle cx="29.1" cy="107.8" r="0.55" fill="#000" opacity="0.30"/><circle cx="28.0" cy="109.0" r="0.62" fill="#000" opacity="0.30"/><circle cx="28.4" cy="104.6" r="0.50" fill="#000" opacity="0.30"/><circle cx="25.0" cy="108.2" r="0.41" fill="#000" opacity="0.30"/><circle cx="35.7" cy="101.2" r="0.70" fill="#000" opacity="0.30"/><circle cx="31.6" cy="107.9" r="0.79" fill="#000" opacity="0.30"/><circle cx="32.1" cy="110.0" r="0.37" fill="#000" opacity="0.30"/><circle cx="24.6" cy="109.8" r="0.65" fill="#000" opacity="0.30"/><circle cx="26.4" cy="109.3" r="0.39" fill="#000" opacity="0.30"/><circle cx="27.0" cy="109.9" r="0.40" fill="#000" opacity="0.30"/><circle cx="28.7" cy="104.9" r="0.52" fill="#000" opacity="0.30"/><circle cx="30.5" cy="112.9" r="0.40" fill="#000" opacity="0.30"/><circle cx="28.6" cy="112.3" r="0.65" fill="#000" opacity="0.30"/><circle cx="33.9" cy="107.7" r="0.77" fill="#000" opacity="0.30"/><circle cx="33.2" cy="106.2" r="0.66" fill="#000" opacity="0.30"/><circle cx="30.9" cy="109.3" r="0.31" fill="#000" opacity="0.30"/><circle cx="32.1" cy="104.9" r="0.62" fill="#000" opacity="0.30"/><circle cx="28.8" cy="111.3" r="0.38" fill="#000" opacity="0.30"/><circle cx="22.8" cy="101.7" r="0.45" fill="#000" opacity="0.30"/><circle cx="30.8" cy="109.0" r="0.48" fill="#000" opacity="0.30"/><circle cx="33.4" cy="105.3" r="0.53" fill="#000" opacity="0.30"/><circle cx="30.1" cy="109.4" r="0.38" fill="#000" opacity="0.30"/><circle cx="29.6" cy="105.2" r="0.80" fill="#000" opacity="0.30"/><circle cx="33.5" cy="105.7" r="0.54" fill="#000" opacity="0.30"/><circle cx="29.7" cy="107.1" r="0.35" fill="#000" opacity="0.30"/><circle cx="25.7" cy="107.1" r="0.40" fill="#000" opacity="0.30"/><circle cx="29.0" cy="109.1" r="0.75" fill="#000" opacity="0.30"/><circle cx="27.2" cy="101.5" r="0.79" fill="#000" opacity="0.30"/><circle cx="24.5" cy="110.4" r="0.49" fill="#000" opacity="0.30"/><circle cx="31.2" cy="103.2" r="0.37" fill="#000" opacity="0.30"/><circle cx="31.1" cy="108.7" r="0.59" fill="#000" opacity="0.30"/><circle cx="28.7" cy="108.8" r="0.72" fill="#000" opacity="0.30"/><circle cx="29.8" cy="105.2" r="0.32" fill="#000" opacity="0.30"/><circle cx="31.8" cy="106.1" r="0.34" fill="#000" opacity="0.30"/><circle cx="27.1" cy="112.3" r="0.74" fill="#000" opacity="0.30"/><circle cx="24.7" cy="108.9" r="0.40" fill="#000" opacity="0.30"/><circle cx="29.3" cy="115.0" r="0.49" fill="#000" opacity="0.30"/><circle cx="32.2" cy="110.9" r="0.36" fill="#000" opacity="0.30"/><circle cx="30.0" cy="111.6" r="0.59" fill="#000" opacity="0.30"/><circle cx="25.9" cy="104.9" r="0.52" fill="#000" opacity="0.30"/><circle cx="33.4" cy="110.5" r="0.33" fill="#000" opacity="0.30"/><circle cx="26.0" cy="109.1" r="0.64" fill="#000" opacity="0.30"/><circle cx="28.5" cy="106.3" r="0.62" fill="#000" opacity="0.30"/><circle cx="27.8" cy="105.3" r="0.37" fill="#000" opacity="0.30"/><circle cx="32.4" cy="106.3" r="0.33" fill="#000" opacity="0.30"/><circle cx="29.6" cy="117.3" r="0.41" fill="#000" opacity="0.30"/><circle cx="24.9" cy="111.8" r="0.71" fill="#000" opacity="0.30"/><circle cx="25.7" cy="104.8" r="0.32" fill="#000" opacity="0.30"/><circle cx="35.8" cy="113.1" r="0.70" fill="#000" opacity="0.30"/><circle cx="29.9" cy="108.7" r="0.42" fill="#000" opacity="0.30"/><circle cx="30.9" cy="107.6" r="0.64" fill="#000" opacity="0.30"/><circle cx="32.9" cy="106.7" r="0.76" fill="#000" opacity="0.30"/><circle cx="28.9" cy="110.2" r="0.31" fill="#000" opacity="0.30"/><circle cx="29.1" cy="107.1" r="0.79" fill="#000" opacity="0.30"/><circle cx="28.5" cy="106.6" r="0.70" fill="#000" opacity="0.30"/><circle cx="30.9" cy="111.6" r="0.35" fill="#000" opacity="0.30"/><circle cx="30.4" cy="102.4" r="0.76" fill="#000" opacity="0.30"/><circle cx="34.9" cy="108.6" r="0.58" fill="#000" opacity="0.30"/><circle cx="30.5" cy="105.3" r="0.61" fill="#000" opacity="0.30"/><circle cx="24.5" cy="105.5" r="0.34" fill="#000" opacity="0.30"/><circle cx="32.6" cy="109.8" r="0.45" fill="#000" opacity="0.30"/><circle cx="28.7" cy="108.7" r="0.67" fill="#000" opacity="0.30"/><circle cx="34.6" cy="109.4" r="0.71" fill="#000" opacity="0.30"/><circle cx="27.5" cy="108.9" r="0.63" fill="#000" opacity="0.30"/><circle cx="29.8" cy="111.6" r="0.36" fill="#000" opacity="0.30"/><circle cx="32.7" cy="107.9" r="0.48" fill="#000" opacity="0.30"/><rect x="39.0" y="99.0" width="20" height="20" fill="#fbf3f0" stroke="#2a2a2a" stroke-width="1"/><defs><radialGradient id="gy"><stop offset="0" stop-color="#ffe850"/><stop offset=".45" stop-color="#ffd860"/><stop offset="1" stop-color="#ffb0b0" stop-opacity="0"/></radialGradient></defs><circle cx="49.0" cy="109.0" r="9" fill="url(#gy)"/><circle cx="74.7" cy="112.3" r="0.72" fill="#000" opacity="0.80"/><circle cx="70.5" cy="106.4" r="0.48" fill="#000" opacity="0.80"/><circle cx="66.7" cy="115.1" r="0.37" fill="#000" opacity="0.80"/><circle cx="62.8" cy="103.6" r="0.68" fill="#000" opacity="0.80"/><circle cx="71.2" cy="108.6" r="0.36" fill="#000" opacity="0.80"/><circle cx="66.8" cy="102.7" r="0.56" fill="#000" opacity="0.80"/><circle cx="64.1" cy="109.9" r="0.61" fill="#000" opacity="0.80"/><circle cx="64.4" cy="102.3" r="0.67" fill="#000" opacity="0.80"/><circle cx="71.2" cy="101.2" r="0.72" fill="#000" opacity="0.80"/><circle cx="68.7" cy="107.1" r="0.64" fill="#000" opacity="0.80"/><circle cx="72.1" cy="104.3" r="0.74" fill="#000" opacity="0.80"/><circle cx="72.3" cy="115.5" r="0.52" fill="#000" opacity="0.80"/><circle cx="67.9" cy="104.6" r="0.45" fill="#000" opacity="0.80"/><circle cx="66.4" cy="112.2" r="0.35" fill="#000" opacity="0.80"/><circle cx="61.6" cy="111.3" r="0.63" fill="#000" opacity="0.80"/><circle cx="75.4" cy="105.6" r="0.72" fill="#000" opacity="0.80"/><circle cx="75.9" cy="108.2" r="0.44" fill="#000" opacity="0.80"/><circle cx="69.0" cy="113.6" r="0.31" fill="#000" opacity="0.80"/><circle cx="69.9" cy="116.0" r="0.76" fill="#000" opacity="0.80"/><circle cx="65.7" cy="114.7" r="0.69" fill="#000" opacity="0.80"/><circle cx="74.5" cy="103.9" r="0.57" fill="#000" opacity="0.80"/><circle cx="74.7" cy="112.9" r="0.46" fill="#000" opacity="0.80"/><circle cx="65.6" cy="105.0" r="0.57" fill="#000" opacity="0.80"/><circle cx="72.1" cy="107.8" r="0.57" fill="#000" opacity="0.80"/><circle cx="65.5" cy="103.8" r="0.77" fill="#000" opacity="0.80"/><circle cx="62.6" cy="112.7" r="0.64" fill="#000" opacity="0.80"/><circle cx="71.3" cy="108.0" r="0.41" fill="#000" opacity="0.80"/><circle cx="67.2" cy="115.9" r="0.31" fill="#000" opacity="0.80"/><circle cx="68.6" cy="115.3" r="0.79" fill="#000" opacity="0.80"/><circle cx="71.4" cy="113.2" r="0.64" fill="#000" opacity="0.80"/><circle cx="86.8" cy="102.9" r="0.68" fill="#000" opacity="0.80"/><circle cx="89.0" cy="112.0" r="0.31" fill="#000" opacity="0.80"/><circle cx="87.8" cy="105.5" r="0.43" fill="#000" opacity="0.80"/><circle cx="94.5" cy="107.3" r="0.60" fill="#000" opacity="0.80"/><circle cx="86.0" cy="104.0" r="0.65" fill="#000" opacity="0.80"/><circle cx="88.4" cy="110.2" r="0.33" fill="#000" opacity="0.80"/><circle cx="93.2" cy="108.9" r="0.37" fill="#000" opacity="0.80"/><circle cx="92.7" cy="111.7" r="0.78" fill="#000" opacity="0.80"/><circle cx="87.6" cy="105.1" r="0.68" fill="#000" opacity="0.80"/><circle cx="90.0" cy="110.5" r="0.45" fill="#000" opacity="0.80"/><circle cx="84.1" cy="111.6" r="0.52" fill="#000" opacity="0.80"/><circle cx="88.7" cy="106.4" r="0.77" fill="#000" opacity="0.80"/><circle cx="85.5" cy="113.8" r="0.32" fill="#000" opacity="0.80"/><circle cx="90.6" cy="105.6" r="0.73" fill="#000" opacity="0.80"/><circle cx="90.9" cy="103.1" r="0.44" fill="#000" opacity="0.80"/><circle cx="92.0" cy="108.7" r="0.75" fill="#000" opacity="0.80"/><circle cx="92.1" cy="113.3" r="0.59" fill="#000" opacity="0.80"/><circle cx="87.4" cy="106.0" r="0.37" fill="#000" opacity="0.80"/><circle cx="94.7" cy="112.5" r="0.49" fill="#000" opacity="0.80"/><circle cx="86.0" cy="104.2" r="0.41" fill="#000" opacity="0.80"/><circle cx="89.8" cy="108.8" r="0.73" fill="#000" opacity="0.80"/><circle cx="93.7" cy="113.5" r="0.48" fill="#000" opacity="0.80"/><circle cx="88.6" cy="105.9" r="0.69" fill="#000" opacity="0.80"/><circle cx="89.0" cy="112.7" r="0.56" fill="#000" opacity="0.80"/><circle cx="91.7" cy="110.7" r="0.70" fill="#000" opacity="0.80"/><circle cx="88.1" cy="112.7" r="0.68" fill="#000" opacity="0.80"/><circle cx="89.5" cy="111.5" r="0.41" fill="#000" opacity="0.80"/><circle cx="85.8" cy="111.3" r="0.62" fill="#000" opacity="0.80"/><circle cx="82.6" cy="109.7" r="0.33" fill="#000" opacity="0.80"/><circle cx="85.7" cy="103.0" r="0.42" fill="#000" opacity="0.80"/><path d="M16.0 17.5h3M17.5 16.0v3" stroke="#000" stroke-width="1"/><path d="M36.0 17.5h3M37.5 16.0v3" stroke="#000" stroke-width="1"/><path d="M56.0 17.5h3M57.5 16.0v3" stroke="#000" stroke-width="1"/><path d="M76.0 17.5h3M77.5 16.0v3" stroke="#000" stroke-width="1"/><path d="M96.0 17.5h3M97.5 16.0v3" stroke="#000" stroke-width="1"/><path d="M16.0 37.5h3M17.5 36.0v3" stroke="#000" stroke-width="1"/><path d="M36.0 37.5h3M37.5 36.0v3" stroke="#000" stroke-width="1"/><path d="M56.0 37.5h3M57.5 36.0v3" stroke="#000" stroke-width="1"/><path d="M76.0 37.5h3M77.5 36.0v3" stroke="#000" stroke-width="1"/><path d="M96.0 37.5h3M97.5 36.0v3" stroke="#000" stroke-width="1"/><path d="M16.0 57.5h3M17.5 56.0v3" stroke="#000" stroke-width="1"/><path d="M36.0 57.5h3M37.5 56.0v3" stroke="#000" stroke-width="1"/><path d="M56.0 57.5h3M57.5 56.0v3" stroke="#000" stroke-width="1"/><path d="M76.0 57.5h3M77.5 56.0v3" stroke="#000" stroke-width="1"/><path d="M96.0 57.5h3M97.5 56.0v3" stroke="#000" stroke-width="1"/><path d="M16.0 77.5h3M17.5 76.0v3" stroke="#000" stroke-width="1"/><path d="M36.0 77.5h3M37.5 76.0v3" stroke="#000" stroke-width="1"/><path d="M56.0 77.5h3M57.5 76.0v3" stroke="#000" stroke-width="1"/><path d="M76.0 77.5h3M77.5 76.0v3" stroke="#000" stroke-width="1"/><path d="M96.0 77.5h3M97.5 76.0v3" stroke="#000" stroke-width="1"/><path d="M16.0 97.5h3M17.5 96.0v3" stroke="#000" stroke-width="1"/><path d="M36.0 97.5h3M37.5 96.0v3" stroke="#000" stroke-width="1"/><path d="M56.0 97.5h3M57.5 96.0v3" stroke="#000" stroke-width="1"/><path d="M76.0 97.5h3M77.5 96.0v3" stroke="#000" stroke-width="1"/><path d="M96.0 97.5h3M97.5 96.0v3" stroke="#000" stroke-width="1"/><path d="M16.0 117.5h3M17.5 116.0v3" stroke="#000" stroke-width="1"/><path d="M36.0 117.5h3M37.5 116.0v3" stroke="#000" stroke-width="1"/><path d="M56.0 117.5h3M57.5 116.0v3" stroke="#000" stroke-width="1"/><path d="M76.0 117.5h3M77.5 116.0v3" stroke="#000" stroke-width="1"/><path d="M96.0 117.5h3M97.5 116.0v3" stroke="#000" stroke-width="1"/></svg>
<div class="a" style="left:480px;top:187px;width:117px;height:2px;background:#3a3a3a;"></div>
<div class="a" style="left:480px;top:189px;width:117px;height:11px;background:#262626;"></div>
<svg style="left:483px;top:190px" width="30" height="10"><text x="0" y="5.95" font-size="7" fill="#e0e0e0" font-weight="normal" textLength="28" lengthAdjust="spacingAndGlyphs" font-family="Liberation Sans">Splatters.</text></svg>
<svg style="left:588px;top:191px;" width="6" height="5" viewBox="0 0 6 5"><path d="M0.5 0.5l2.5 2.5 2.5-2.5" fill="none" stroke="#ddd" stroke-width="1.2"/></svg>
<div class="a" style="left:481px;top:201px;width:116px;height:10px;background:#2a2a2a;border-top:1px solid #4a4a4a"></div>
<div class="a" style="left:481px;top:202px;width:10px;height:9px;background:#555;"></div>
<svg style="left:482px;top:203px" width="14" height="10"><g transform="scale(0.9402,1)"><path d="M0.47 3.22H4.31M0.47 5.33H4.31M0.95 1.59V5.33M3.83 1.59V4.39M2.87 2.99L0.71 5.33M6.32 2.05H11.12M6.80 5.33H11.12M10.64 0.65V4.39M8.72 2.99L6.56 5.33" fill="none" stroke="#e0e0e0" stroke-width="0.90"/></g></svg>
<svg style="left:571px;top:203px" width="14" height="10"><text x="0" y="5.95" font-size="7" fill="#d0d0d0" font-weight="normal" textLength="12" lengthAdjust="spacingAndGlyphs" font-family="Liberation Sans">15.0</text></svg>
<svg style="left:588px;top:203px;" width="5" height="8" viewBox="0 0 5 8"><path d="M0.5 3L2.5 0.5 4.5 3M0.5 5l2 2.5 2-2.5" fill="none" stroke="#ccc" stroke-width="1"/></svg>
<svg style="left:486px;top:214px;" width="9" height="9" viewBox="0 0 9 9"><path d="M1 8h7M1 1h4M1 3.5h3M1 6h2M8 1L3 7" stroke="#d8d8d8" stroke-width="1" fill="none"/></svg>
<svg style="left:505px;top:214px;" width="9" height="9" viewBox="0 0 9 9"><path d="M1.5 2.5v6h6v-4l-2-2z" fill="none" stroke="#d8d8d8"/><path d="M2 0h3" stroke="#d8d8d8"/></svg>
<svg style="left:525px;top:214px;" width="9" height="9" viewBox="0 0 9 9"><rect x="3.5" y="1.5" width="5" height="4" fill="none" stroke="#d8d8d8"/><path d="M1 4v4h5" fill="none" stroke="#d8d8d8"/></svg>
<svg style="left:544px;top:214px;" width="9" height="9" viewBox="0 0 9 9"><rect x="0.5" y="0.5" width="8" height="8" fill="none" stroke="#d8d8d8"/><path d="M2 2l5 5M7 2l-5 5" stroke="#d8d8d8" stroke-width="1.5"/></svg>
<svg style="left:564px;top:214px;" width="9" height="9" viewBox="0 0 9 9"><path d="M7 3A3.3 3.3 0 1 0 7.5 6" fill="none" stroke="#d8d8d8" stroke-width="1.4"/><path d="M5 1l3.5 0.5-1 3z" fill="#d8d8d8"/></svg>
<svg style="left:583px;top:214px;" width="9" height="9" viewBox="0 0 9 9"><path d="M2 5 Q2 1 5 1 Q8 1 8 5z" fill="none" stroke="#d8d8d8"/><rect x="0.5" y="5.5" width="8" height="3" fill="#d8d8d8"/></svg>
<div class="a" style="left:535px;top:227px;width:2px;height:2px;background:#8a8a8a;"></div>
<div class="a" style="left:538px;top:227px;width:2px;height:2px;background:#8a8a8a;"></div>
<div class="a" style="left:541px;top:227px;width:2px;height:2px;background:#8a8a8a;"></div>
<div class="a" style="left:480px;top:230px;width:117px;height:11px;background:#3e3e3e;"></div>
<div class="a" style="left:480px;top:230px;width:33px;height:11px;background:#2b2b2b;"></div>
<div class="a" style="left:480px;top:241px;width:117px;height:3px;background:#4a4a4a;"></div>
<svg style="left:482px;top:231px;" width="8" height="8" viewBox="0 0 8 8"><path d="M0.5 1.5h7M0.5 4h7M0.5 6.5h7" stroke="#ddd" stroke-width="1"/></svg>
<div class="a" style="left:492px;top:231px;width:9px;height:9px;background:#222;border:1px solid #555"></div>
<svg style="left:493px;top:232px;" width="7" height="7" viewBox="0 0 7 7"><path d="M0.5 0.5h6M0.5 6.5h6M2.3 0.5v6M4.6 0.5v6" stroke="#ddd" stroke-width=".9"/></svg>
<svg style="left:504px;top:231px;" width="8" height="8" viewBox="0 0 8 8"><path d="M0.5 1.5h7M1 3.5h6M2 7 Q4 3 6 7" fill="none" stroke="#ddd" stroke-width="1"/></svg>
<svg style="left:591px;top:233px;" width="6" height="6" viewBox="0 0 6 6"><rect x="0.5" y="0.5" width="5" height="5" fill="none" stroke="#bbb"/><path d="M4.5 1.5v3l-3-1.5z" fill="#ccc"/></svg>
<div class="a" style="left:481px;top:245px;width:89px;height:14px;background:#2a2a2a;border-radius:2px"></div>
<svg style="left:485px;top:249px" width="22" height="10"><g transform="scale(1.2991,1)"><path d="M3.59 1.12L0.79 3.46M2.59 2.29V5.33M8.46 1.12L5.66 3.46M7.46 2.29V5.33M13.34 1.12L10.54 3.46M12.34 2.29V5.33" fill="none" stroke="#d8d8d8" stroke-width="0.90"/></g></svg>
<svg style="left:541px;top:248px" width="16" height="10"><g transform="scale(1.1111,1)"><path d="M0.95 0.88H4.31M0.47 2.05H4.31M1.91 0.65V4.39M6.80 0.88H10.64M6.32 4.39H10.64M6.32 5.33H11.12M7.76 0.65V5.33M8.72 2.99L6.56 5.33" fill="none" stroke="#d0d0d0" stroke-width="0.90"/></g></svg>
<svg style="left:559px;top:250px;" width="8" height="5" viewBox="0 0 8 5"><path d="M0.5 0.5l3.5 3.5 3.5-3.5" fill="none" stroke="#ddd" stroke-width="1.2"/></svg>
<div class="a" style="left:571px;top:245px;width:24px;height:14px;background:#2a2a2a;border-radius:2px"></div>
<svg style="left:574px;top:248px;" width="8" height="8" viewBox="0 0 8 8"><path d="M6.5 3A3 3 0 1 0 6 6" fill="none" stroke="#ccc" stroke-width="1.2"/><path d="M4.5 1l3 .5-1.2 2.5z" fill="#ccc"/></svg>
<svg style="left:585px;top:250px;" width="8" height="5" viewBox="0 0 8 5"><path d="M0.5 0.5l3.5 3.5 3.5-3.5" fill="none" stroke="#ddd" stroke-width="1.2"/></svg>
<div class="a" style="left:481px;top:260px;width:113px;height:11px;background:#5c5c5c;"></div>
<div class="a" style="left:481px;top:270px;width:113px;height:1px;background:#333;"></div>
<svg style="left:483px;top:262px" width="34" height="10"><g transform="scale(1.3248,1)"><path d="M0.47 0.88H5.26M0.95 2.05H5.26M1.91 1.59V5.33M4.79 0.65V4.39M2.87 2.99L0.71 5.33M6.80 3.22H10.16M6.32 4.39H10.64M6.32 5.33H11.12M8.72 0.65V5.33M8.72 2.99L6.56 5.33M12.17 2.05H16.96M12.65 5.33H16.96M14.57 1.59V4.39M15.53 0.65V4.39M18.02 2.05H22.34M18.50 4.39H21.86M20.42 0.65V5.33M22.34 0.65V4.39M20.42 2.99L18.26 5.33" fill="none" stroke="#e8e8e8" stroke-width="0.90"/></g></svg>
<svg style="left:569px;top:262px" width="19" height="10"><text x="0" y="5.95" font-size="7" fill="#dcdcdc" font-weight="normal" textLength="17" lengthAdjust="spacingAndGlyphs" font-family="Liberation Sans">100.0</text></svg>
<div class="a" style="left:587px;top:260px;width:7px;height:10px;background:#3a3a3a;"></div>
<svg style="left:588px;top:261px;" width="5" height="8" viewBox="0 0 5 8"><path d="M0.5 3L2.5 0.5 4.5 3M0.5 5l2 2.5 2-2.5" fill="none" stroke="#ccc" stroke-width="1"/></svg>
<svg style="left:481px;top:273px" width="18" height="10"><g transform="scale(1.1257,1)"><path d="M0.47 0.88H5.26M0.95 3.22H4.79M2.87 0.65V5.33M3.83 1.59V5.33M6.32 0.88H11.12M6.32 2.05H11.12M6.80 5.33H10.16M9.68 0.65V4.39M8.72 2.99L6.56 5.33" fill="none" stroke="#d0d0d0" stroke-width="0.90"/><text x="11.70" y="5.52" font-size="6.5" fill="#d0d0d0" font-family="Liberation Sans" textLength="1.63" lengthAdjust="spacingAndGlyphs">:</text></g></svg>
<svg style="left:500px;top:273px;" width="9" height="9" viewBox="0 0 9 9"><path d="M1 8L7 1" stroke="#ddd" stroke-width="1.2"/></svg>
<svg style="left:514px;top:273px;" width="9" height="9" viewBox="0 0 9 9"><path d="M4.5 1v7M1 4.5h7" stroke="#ddd" stroke-width="1.2"/></svg>
<svg style="left:528px;top:273px;" width="8" height="8" viewBox="0 0 8 8"><rect x="0" y="0" width="2" height="2" fill="#ddd"/><rect x="0" y="4" width="2" height="2" fill="#ddd"/><rect x="2" y="2" width="2" height="2" fill="#ddd"/><rect x="2" y="6" width="2" height="2" fill="#ddd"/><rect x="4" y="0" width="2" height="2" fill="#ddd"/><rect x="4" y="4" width="2" height="2" fill="#ddd"/><rect x="6" y="2" width="2" height="2" fill="#ddd"/><rect x="6" y="6" width="2" height="2" fill="#ddd"/></svg>
<div class="a" style="left:480px;top:283px;width:116px;height:149px;background:#303030;"></div>
<div class="a" style="left:480px;top:283px;width:116px;height:19px;background:#383838;"></div>
<div class="a" style="left:480px;top:302px;width:116px;height:16px;background:#262626;"></div>
<svg style="left:484px;top:290px;" width="12" height="8" viewBox="0 0 12 8"><path d="M0.5 4 Q6 -1.5 11.5 4 Q6 9.5 0.5 4z" fill="none" stroke="#e0e0e0" stroke-width="1.1"/><circle cx="6" cy="4" r="2" fill="#333" stroke="#e0e0e0" stroke-width="1"/></svg>
<svg style="left:484px;top:306px;" width="12" height="8" viewBox="0 0 12 8"><path d="M0.5 4 Q6 -1.5 11.5 4 Q6 9.5 0.5 4z" fill="none" stroke="#e0e0e0" stroke-width="1.1"/><circle cx="6" cy="4" r="2" fill="#333" stroke="#e0e0e0" stroke-width="1"/></svg>
<div class="a" style="left:525px;top:285px;width:23px;height:16px;background:#151515;"></div>
<svg style="left:526px;top:286px;" width="21" height="14" viewBox="0 0 21 14"><rect x="0" y="0" width="2" height="2" fill="#5e5e66"/><rect x="0" y="2" width="2" height="2" fill="#8c8c94"/><rect x="0" y="4" width="2" height="2" fill="#5e5e66"/><rect x="0" y="6" width="2" height="2" fill="#8c8c94"/><rect x="0" y="8" width="2" height="2" fill="#5e5e66"/><rect x="0" y="10" width="2" height="2" fill="#8c8c94"/><rect x="0" y="12" width="2" height="2" fill="#5e5e66"/><rect x="2" y="0" width="2" height="2" fill="#8c8c94"/><rect x="2" y="2" width="2" height="2" fill="#5e5e66"/><rect x="2" y="4" width="2" height="2" fill="#8c8c94"/><rect x="2" y="6" width="2" height="2" fill="#5e5e66"/><rect x="2" y="8" width="2" height="2" fill="#8c8c94"/><rect x="2" y="10" width="2" height="2" fill="#5e5e66"/><rect x="2" y="12" width="2" height="2" fill="#8c8c94"/><rect x="4" y="0" width="2" height="2" fill="#5e5e66"/><rect x="4" y="2" width="2" height="2" fill="#8c8c94"/><rect x="4" y="4" width="2" height="2" fill="#5e5e66"/><rect x="4" y="6" width="2" height="2" fill="#8c8c94"/><rect x="4" y="8" width="2" height="2" fill="#5e5e66"/><rect x="4" y="10" width="2" height="2" fill="#8c8c94"/><rect x="4" y="12" width="2" height="2" fill="#5e5e66"/><rect x="6" y="0" width="2" height="2" fill="#8c8c94"/><rect x="6" y="2" width="2" height="2" fill="#5e5e66"/><rect x="6" y="4" width="2" height="2" fill="#8c8c94"/><rect x="6" y="6" width="2" height="2" fill="#5e5e66"/><rect x="6" y="8" width="2" height="2" fill="#8c8c94"/><rect x="6" y="10" width="2" height="2" fill="#5e5e66"/><rect x="6" y="12" width="2" height="2" fill="#8c8c94"/><rect x="8" y="0" width="2" height="2" fill="#5e5e66"/><rect x="8" y="2" width="2" height="2" fill="#8c8c94"/><rect x="8" y="4" width="2" height="2" fill="#5e5e66"/><rect x="8" y="6" width="2" height="2" fill="#8c8c94"/><rect x="8" y="8" width="2" height="2" fill="#5e5e66"/><rect x="8" y="10" width="2" height="2" fill="#8c8c94"/><rect x="8" y="12" width="2" height="2" fill="#5e5e66"/><rect x="10" y="0" width="2" height="2" fill="#8c8c94"/><rect x="10" y="2" width="2" height="2" fill="#5e5e66"/><rect x="10" y="4" width="2" height="2" fill="#8c8c94"/><rect x="10" y="6" width="2" height="2" fill="#5e5e66"/><rect x="10" y="8" width="2" height="2" fill="#8c8c94"/><rect x="10" y="10" width="2" height="2" fill="#5e5e66"/><rect x="10" y="12" width="2" height="2" fill="#8c8c94"/><rect x="12" y="0" width="2" height="2" fill="#5e5e66"/><rect x="12" y="2" width="2" height="2" fill="#8c8c94"/><rect x="12" y="4" width="2" height="2" fill="#5e5e66"/><rect x="12" y="6" width="2" height="2" fill="#8c8c94"/><rect x="12" y="8" width="2" height="2" fill="#5e5e66"/><rect x="12" y="10" width="2" height="2" fill="#8c8c94"/><rect x="12" y="12" width="2" height="2" fill="#5e5e66"/><rect x="14" y="0" width="2" height="2" fill="#8c8c94"/><rect x="14" y="2" width="2" height="2" fill="#5e5e66"/><rect x="14" y="4" width="2" height="2" fill="#8c8c94"/><rect x="14" y="6" width="2" height="2" fill="#5e5e66"/><rect x="14" y="8" width="2" height="2" fill="#8c8c94"/><rect x="14" y="10" width="2" height="2" fill="#5e5e66"/><rect x="14" y="12" width="2" height="2" fill="#8c8c94"/><rect x="16" y="0" width="2" height="2" fill="#5e5e66"/><rect x="16" y="2" width="2" height="2" fill="#8c8c94"/><rect x="16" y="4" width="2" height="2" fill="#5e5e66"/><rect x="16" y="6" width="2" height="2" fill="#8c8c94"/><rect x="16" y="8" width="2" height="2" fill="#5e5e66"/><rect x="16" y="10" width="2" height="2" fill="#8c8c94"/><rect x="16" y="12" width="2" height="2" fill="#5e5e66"/><rect x="18" y="0" width="2" height="2" fill="#8c8c94"/><rect x="18" y="2" width="2" height="2" fill="#5e5e66"/><rect x="18" y="4" width="2" height="2" fill="#8c8c94"/><rect x="18" y="6" width="2" height="2" fill="#5e5e66"/><rect x="18" y="8" width="2" height="2" fill="#8c8c94"/><rect x="18" y="10" width="2" height="2" fill="#5e5e66"/><rect x="18" y="12" width="2" height="2" fill="#8c8c94"/><circle cx="5" cy="5.5" r="3.8" fill="#ffff00"/></svg>
<svg style="left:550px;top:290px" width="35" height="10"><g transform="scale(1.2623,1)"><path d="M0.95 0.88H4.79M0.95 3.22H4.31M3.83 1.59V4.39M6.64 1.59H9.84L7.44 5.33M11.91 1.12V4.86Q12.11 5.33 14.71 4.39M14.11 1.12V3.46M16.39 1.59H19.59L17.19 5.33M21.26 1.59H24.46L22.06 5.33" fill="none" stroke="#e0e0e0" stroke-width="0.90"/></g></svg>
<div class="a" style="left:526px;top:302px;width:21px;height:15px;background:#ffffff;"></div>
<svg style="left:550px;top:306px" width="15" height="10"><g transform="scale(1.0256,1)"><path d="M0.47 2.05H4.31M1.43 3.22H4.31M0.95 4.39H4.31M1.91 1.59V5.33M3.83 0.65V4.39M2.87 2.99L0.71 5.33M6.32 0.88H11.12M7.28 4.39H10.16M6.32 5.33H10.64M8.72 1.59V5.33M10.64 0.65V4.39" fill="none" stroke="#e0e0e0" stroke-width="0.90"/></g></svg>
<div class="a" style="left:480px;top:432px;width:117px;height:16px;background:#3d3d3d;"></div>
<svg style="left:483px;top:435px;" width="9" height="10" viewBox="0 0 9 10"><path d="M1.5 2.5v6h6v-5l-2-1z" fill="none" stroke="#ddd"/><path d="M2 0.5h3" stroke="#ddd"/></svg>
<svg style="left:498px;top:435px;" width="9" height="10" viewBox="0 0 9 10"><path d="M1.5 2.5v6h6v-5l-2-1z" fill="#999" stroke="#ddd"/><path d="M3 0.5h4" stroke="#ddd"/></svg>
<svg style="left:513px;top:435px;" width="9" height="10" viewBox="0 0 9 10"><path d="M1 6l3.5-3.5 3.5 3.5" fill="none" stroke="#ddd" stroke-width="1.3"/></svg>
<svg style="left:528px;top:435px;" width="9" height="10" viewBox="0 0 9 10"><path d="M1 3l3.5 3.5 3.5-3.5" fill="none" stroke="#ddd" stroke-width="1.3"/></svg>
<svg style="left:542px;top:435px;" width="9" height="10" viewBox="0 0 9 10"><rect x="3.5" y="1.5" width="5" height="4" fill="none" stroke="#ddd"/><path d="M1 4v4h5" fill="none" stroke="#ddd"/></svg>
<svg style="left:556px;top:435px;" width="9" height="10" viewBox="0 0 9 10"><path d="M1 2h3M1 5h3M1 8h3M6 1v7M4.5 6.5l1.5 2 1.5-2" fill="none" stroke="#ddd"/></svg>
<svg style="left:571px;top:435px;" width="9" height="10" viewBox="0 0 9 10"><path d="M2 5 Q2 1 5 1 Q8 1 8 5z" fill="none" stroke="#ddd"/><rect x="0.5" y="5.5" width="8" height="3" fill="#ddd"/></svg>
<svg style="left:585px;top:435px;" width="9" height="10" viewBox="0 0 9 10"><rect x="0.5" y="0.5" width="8" height="8" fill="none" stroke="#ddd"/><path d="M2 2l5 5M7 2l-5 5" stroke="#ddd" stroke-width="1.5"/></svg>
<div class="a" style="left:0px;top:18px;width:1px;height:432px;background:#7b8b99;"></div>
<div class="a" style="left:1px;top:31px;width:1px;height:417px;background:#37434f;"></div>
<div class="a" style="left:2px;top:31px;width:1px;height:417px;background:#464d55;"></div>
<div class="a" style="left:596px;top:31px;width:2px;height:417px;background:#2f363c;"></div>
<div class="a" style="left:598px;top:18px;width:1px;height:432px;background:#283440;"></div>
<div class="a" style="left:599px;top:18px;width:1px;height:432px;background:#7b8b99;"></div>
<div class="a" style="left:0px;top:448px;width:600px;height:1px;background:#394150;"></div>
<div class="a" style="left:0px;top:449px;width:600px;height:1px;background:#7b8da2;"></div>
</div></body></html>
